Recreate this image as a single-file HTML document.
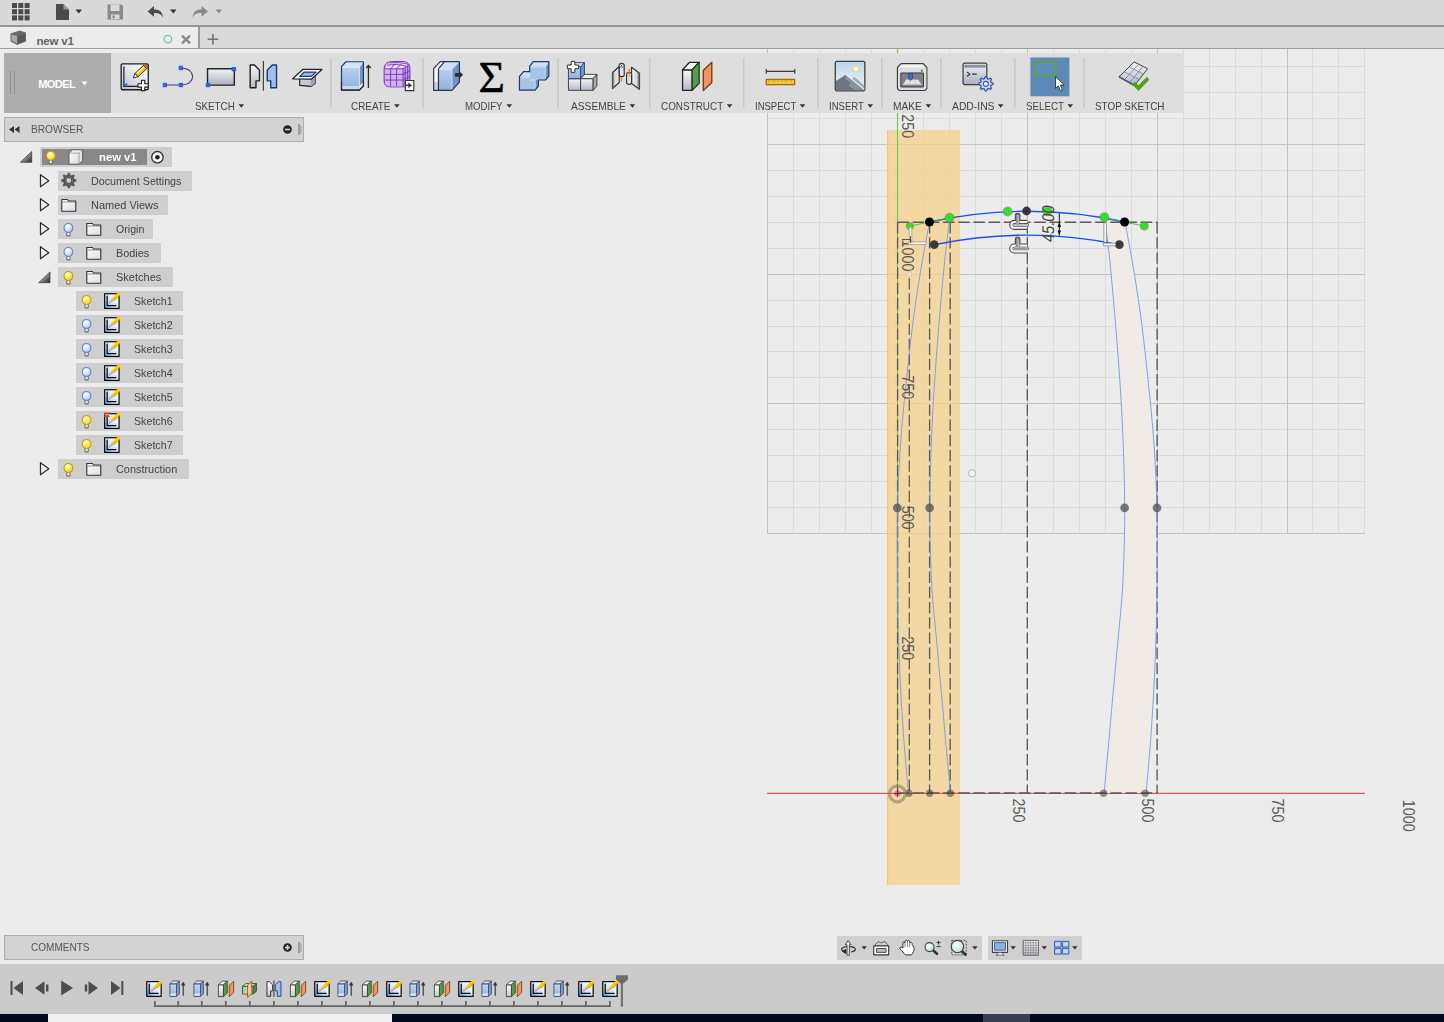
<!DOCTYPE html>
<html lang="en"><head><meta charset="utf-8"><title>new v1</title>
<style>
*{box-sizing:border-box;margin:0;padding:0}
html,body{width:1444px;height:1022px;overflow:hidden;background:#ececec}
body{position:relative;font-family:"Liberation Sans",Arial,sans-serif;font-size:11px;color:#444}
.abs{position:absolute}
#topbar{left:0;top:0;width:1444px;height:25px;background:#d9d9d9}
#topline{left:0;top:25px;width:1444px;height:2px;background:#969696}
#tabrow{left:0;top:27px;width:1444px;height:21px;background:#dadada}
#tab{left:0;top:27px;width:198px;height:21px;background:#ececec}
#tabsep{left:198px;top:27px;width:2px;height:21px;background:#9c9c9c}
#tabline{left:0;top:48px;width:1444px;height:1px;background:#9e9e9e}
#tabtitle{left:36.400px;top:33.700px;font-weight:bold;font-size:11.600px;color:#666;letter-spacing:-0.2px;line-height:14px}
#toolbar{left:4px;top:53px;width:1179.500px;height:59.800px;background:#dedede}
#model{left:4px;top:53px;width:106.800px;height:59.800px;background:#adadad}
.tlabel{position:absolute;top:100px;height:12px;line-height:12px;font-size:11px;color:#444;white-space:nowrap;transform-origin:0 50%;}
.tsep{position:absolute;top:60px;width:1px;height:46px;background:#c6c6c6}
#bhead{left:4px;top:117px;width:300px;height:24.500px;background:#d3d3d3;border:1px solid #adadad}
#chead{left:4px;top:935px;width:300px;height:24.700px;background:#d3d3d3;border:1px solid #adadad}
.ptitle{position:absolute;font-size:11px;color:#555;line-height:12px;white-space:nowrap;transform-origin:0 50%}
.row{position:absolute;height:20px;background:#cecece}
.rtext{position:absolute;font-size:11px;line-height:12px;color:#444;white-space:nowrap;transform-origin:0 50%}
#nav1{left:837px;top:936px;width:145px;height:24px;background:#d0d0d0}
#nav2{left:988px;top:936px;width:94px;height:24px;background:#d0d0d0}
#timeline{left:0;top:964px;width:1444px;height:50px;background:#cbcbcb}
#strip{left:0;top:1014px;width:1444px;height:8px;background:#040a1e}
#strip1{left:48px;top:1014px;width:344px;height:8px;background:#f0f0f0}
#strip2{left:983px;top:1014px;width:47px;height:8px;background:#3b3e50}
svg{position:absolute;overflow:visible}
</style></head>
<body>
<svg class="abs" style="left:0;top:0" width="1444" height="1022" viewBox="0 0 1444 1022">
<path d="M793.5 49V534.0M819.5 49V534.0M845.5 49V534.0M871.5 49V534.0M923.5 49V534.0M949.5 49V534.0M975.5 49V534.0M1001.5 49V534.0M1053.5 49V534.0M1079.5 49V534.0M1105.5 49V534.0M1131.5 49V534.0M1183.5 49V534.0M1209.5 49V534.0M1235.5 49V534.0M1261.5 49V534.0M1312.5 49V534.0M1338.5 49V534.0M1364.5 49V534.0M767.0 507.5H1365.0M767.0 481.5H1365.0M767.0 455.5H1365.0M767.0 429.5H1365.0M767.0 377.5H1365.0M767.0 351.5H1365.0M767.0 326.5H1365.0M767.0 300.5H1365.0M767.0 248.5H1365.0M767.0 222.5H1365.0M767.0 196.5H1365.0M767.0 170.5H1365.0M767.0 118.5H1365.0M767.0 92.5H1365.0M767.0 66.5H1365.0" stroke="#dadada" stroke-width="1" fill="none" shape-rendering="crispEdges"/>
<path d="M767.5 49V534.0M897.5 49V534.0M1027.5 49V534.0M1157.5 49V534.0M1287.5 49V534.0M767.0 533.5H1365.0M767.0 403.5H1365.0M767.0 274.5H1365.0M767.0 144.5H1365.0" stroke="#c1c1c1" stroke-width="1" fill="none" shape-rendering="crispEdges"/>
<rect x="887" y="130" width="73" height="755" fill="#f7d18c" fill-opacity="0.75"/>
<rect x="887" y="130" width="1.300" height="755" fill="#f6c570"/>
<path d="M897.5 49V793" stroke="#62d03c" stroke-width="1.1"/>
<path d="M767 793.4H1365" stroke="#f0505a" stroke-width="1.1"/>
<path d="M1104.8 217.7 C1105.8 226.2 1108.8 250.4 1110.6 268.7 C1112.4 287.0 1114.2 307.8 1115.8 327.3 C1117.4 346.9 1119.0 366.4 1120.2 386.0 C1121.4 405.6 1122.5 424.3 1123.2 444.6 C1124.0 464.9 1124.6 490.4 1124.7 508.0 C1124.8 525.6 1124.4 536.7 1124.1 550.0 C1123.8 563.3 1123.2 576.8 1122.6 588.0 C1121.9 599.2 1121.1 607.2 1120.2 617.0 C1119.3 626.8 1118.2 637.2 1117.3 647.0 C1116.4 656.8 1115.6 666.3 1114.7 676.0 C1113.8 685.7 1112.9 695.2 1112.0 705.0 C1111.1 714.8 1110.7 720.3 1109.4 735.0 C1108.1 749.7 1105.0 783.3 1104.1 793.0 L1146.1 793.0 L1146.1 793.0 C1146.9 783.3 1149.6 754.5 1151.0 735.0 C1152.4 715.5 1153.6 695.7 1154.5 676.0 C1155.4 656.3 1156.1 636.3 1156.6 617.0 C1157.0 597.7 1157.1 578.2 1157.2 560.0 C1157.3 541.8 1157.5 527.2 1157.0 508.0 C1156.5 488.8 1155.4 464.9 1154.0 444.6 C1152.6 424.3 1150.7 405.6 1148.7 386.0 C1146.7 366.4 1144.7 346.9 1142.2 327.3 C1139.7 307.8 1136.4 286.2 1133.5 268.7 C1130.6 251.1 1126.4 229.8 1125.0 222.0 Z" fill="#f0ebe6"/>
<path d="M897.5 222.2H1157.2" stroke="#5a5a5a" stroke-width="1.350" stroke-dasharray="11.4 3.8" fill="none"/>
<path d="M897.5 793H1157.2" stroke="#5a5a5a" stroke-width="1.350" stroke-dasharray="11.4 3.8" fill="none"/>
<path d="M897.6 222.0V793" stroke="#5a5a5a" stroke-width="1.350" stroke-dasharray="11.4 3.8" fill="none"/>
<path d="M929.6 222.0V793" stroke="#5a5a5a" stroke-width="1.350" stroke-dasharray="11.4 3.8" fill="none"/>
<path d="M950.2 222.0V793" stroke="#5a5a5a" stroke-width="1.350" stroke-dasharray="11.4 3.8" fill="none"/>
<path d="M1027.3 222.0V793" stroke="#5a5a5a" stroke-width="1.350" stroke-dasharray="11.4 3.8" fill="none"/>
<path d="M1157.1 222.0V793" stroke="#5a5a5a" stroke-width="1.350" stroke-dasharray="11.4 3.8" fill="none"/>
<path d="M909.3 278V793" stroke="#5a5a5a" stroke-width="1.25" stroke-dasharray="11.4 3.8" fill="none"/>
<path d="M929.5 222.0 C928.1 229.8 923.9 251.1 921.0 268.7 C918.1 286.2 914.8 307.8 912.3 327.3 C909.8 346.9 907.8 366.4 905.8 386.0 C903.8 405.6 901.9 424.3 900.5 444.6 C899.1 464.9 898.0 488.8 897.5 508.0 C897.0 527.2 897.2 541.8 897.3 560.0 C897.4 578.2 897.4 597.7 897.9 617.0 C898.4 636.3 899.1 656.3 900.0 676.0 C900.9 695.7 902.1 715.5 903.5 735.0 C904.9 754.5 907.6 783.3 908.4 793.0" stroke="#7395ee" stroke-width="0.9" fill="none"/>
<path d="M949.7 217.7 C948.7 226.2 945.7 250.4 943.9 268.7 C942.1 287.0 940.3 307.8 938.7 327.3 C937.1 346.9 935.5 366.4 934.3 386.0 C933.1 405.6 932.0 424.3 931.3 444.6 C930.5 464.9 929.9 490.4 929.8 508.0 C929.6 525.6 930.0 536.7 930.4 550.0 C930.8 563.3 931.2 576.8 931.9 588.0 C932.5 599.2 933.4 607.2 934.3 617.0 C935.2 626.8 936.3 637.2 937.2 647.0 C938.1 656.8 938.9 666.3 939.8 676.0 C940.7 685.7 941.6 695.2 942.5 705.0 C943.4 714.8 943.8 720.3 945.1 735.0 C946.4 749.7 949.5 783.3 950.4 793.0" stroke="#7395ee" stroke-width="0.9" fill="none"/>
<path d="M1125.0 222.0 C1126.4 229.8 1130.6 251.1 1133.5 268.7 C1136.4 286.2 1139.7 307.8 1142.2 327.3 C1144.7 346.9 1146.7 366.4 1148.7 386.0 C1150.7 405.6 1152.6 424.3 1154.0 444.6 C1155.4 464.9 1156.5 488.8 1157.0 508.0 C1157.5 527.2 1157.3 541.8 1157.2 560.0 C1157.1 578.2 1157.0 597.7 1156.6 617.0 C1156.1 636.3 1155.4 656.3 1154.5 676.0 C1153.6 695.7 1152.4 715.5 1151.0 735.0 C1149.6 754.5 1146.9 783.3 1146.1 793.0" stroke="#7395ee" stroke-width="0.9" fill="none"/>
<path d="M1104.8 217.7 C1105.8 226.2 1108.8 250.4 1110.6 268.7 C1112.4 287.0 1114.2 307.8 1115.8 327.3 C1117.4 346.9 1119.0 366.4 1120.2 386.0 C1121.4 405.6 1122.5 424.3 1123.2 444.6 C1124.0 464.9 1124.6 490.4 1124.7 508.0 C1124.8 525.6 1124.4 536.7 1124.1 550.0 C1123.8 563.3 1123.2 576.8 1122.6 588.0 C1121.9 599.2 1121.1 607.2 1120.2 617.0 C1119.3 626.8 1118.2 637.2 1117.3 647.0 C1116.4 656.8 1115.6 666.3 1114.7 676.0 C1113.8 685.7 1112.9 695.2 1112.0 705.0 C1111.1 714.8 1110.7 720.3 1109.4 735.0 C1108.1 749.7 1105.0 783.3 1104.1 793.0" stroke="#7395ee" stroke-width="0.9" fill="none"/>
<path d="M929.5 222Q1027.2 200.5 1124.6 222" stroke="#1b4df5" stroke-width="1.4" fill="none"/>
<path d="M934.2 244.7Q1027.2 225.5 1119.4 244.7" stroke="#1b4df5" stroke-width="1.4" fill="none"/>
<path d="M910 226.1L929.5 222M1124.6 222L1144.3 226.1" stroke="#44d430" stroke-width="1" fill="none"/>
<path d="M929.5 222L949.7 217.7M1104.6 217.5L1124.6 222" stroke="#44d430" stroke-width="1" fill="none" opacity="0.6"/>
<defs><filter id="blur1" x="-50%" y="-50%" width="200%" height="200%"><feGaussianBlur stdDeviation="0.7"/></filter><filter id="blur2" x="-50%" y="-50%" width="200%" height="200%"><feGaussianBlur stdDeviation="0.45"/></filter></defs>
<circle cx="972" cy="473.3" r="3.6" fill="#f4f4f4" stroke="#b4b4b4" stroke-width="1"/>
<circle cx="909.3" cy="274" r="2.6" fill="#f0e6d0" stroke="#c9c0b0" stroke-width="0.9"/>
<circle cx="897.3" cy="507.8" r="4.4" fill="#4c4c4c" opacity="0.72" filter="url(#blur1)"/>
<circle cx="929.6" cy="507.8" r="4.4" fill="#4c4c4c" opacity="0.72" filter="url(#blur1)"/>
<circle cx="1124.6" cy="507.8" r="4.4" fill="#4c4c4c" opacity="0.72" filter="url(#blur1)"/>
<circle cx="1157.0" cy="507.8" r="4.4" fill="#4c4c4c" opacity="0.72" filter="url(#blur1)"/>
<circle cx="908.8" cy="793.2" r="3.7" fill="#3a3428" opacity="0.5" filter="url(#blur1)"/>
<circle cx="929.6" cy="793.2" r="3.7" fill="#3a3428" opacity="0.5" filter="url(#blur1)"/>
<circle cx="950.3" cy="793.2" r="3.7" fill="#3a3428" opacity="0.5" filter="url(#blur1)"/>
<circle cx="1103.6" cy="793.2" r="3.7" fill="#3a3428" opacity="0.5" filter="url(#blur1)"/>
<circle cx="1145.2" cy="793.2" r="3.7" fill="#3a3428" opacity="0.5" filter="url(#blur1)"/>
<circle cx="897.4" cy="793.8" r="8" fill="none" stroke="#8c8268" stroke-width="3.200" opacity="0.62" filter="url(#blur2)"/><circle cx="897.400" cy="793.600" r="3" fill="#e2609c" opacity="0.9"/><path d="M894 793.500h7M897.500 790v7" stroke="#402020" stroke-width="0.900" opacity="0.8"/>
<circle cx="1026.6" cy="211.0" r="4.4" fill="#2c2c2c" opacity="0.9" filter="url(#blur1)"/>
<circle cx="934.2" cy="244.7" r="4.4" fill="#2c2c2c" opacity="0.9" filter="url(#blur1)"/>
<circle cx="1119.3" cy="244.7" r="4.4" fill="#2c2c2c" opacity="0.9" filter="url(#blur1)"/>
<circle cx="909.9" cy="226.1" r="4.2" fill="#6a6a5a" opacity="0.55" filter="url(#blur2)"/>
<circle cx="909.9" cy="226.1" r="3.2" fill="#2fe028" filter="url(#blur2)"/>
<circle cx="949.5" cy="217.7" r="5.0" fill="#6a6a5a" opacity="0.55" filter="url(#blur2)"/>
<circle cx="949.5" cy="217.7" r="4.0" fill="#2fe028" filter="url(#blur2)"/>
<circle cx="1007.6" cy="211.5" r="5.0" fill="#6a6a5a" opacity="0.55" filter="url(#blur2)"/>
<circle cx="1007.6" cy="211.5" r="4.0" fill="#2fe028" filter="url(#blur2)"/>
<circle cx="1047.3" cy="211.3" r="5.0" fill="#6a6a5a" opacity="0.55" filter="url(#blur2)"/>
<circle cx="1047.3" cy="211.3" r="4.0" fill="#2fe028" filter="url(#blur2)"/>
<circle cx="1104.4" cy="217.2" r="5.0" fill="#6a6a5a" opacity="0.55" filter="url(#blur2)"/>
<circle cx="1104.4" cy="217.2" r="4.0" fill="#2fe028" filter="url(#blur2)"/>
<circle cx="1144.3" cy="226.1" r="4.6" fill="#6a6a5a" opacity="0.55" filter="url(#blur2)"/>
<circle cx="1144.3" cy="226.1" r="3.6" fill="#2fe028" filter="url(#blur2)"/>
<circle cx="929.5" cy="222" r="4.5" fill="#000"/>
<circle cx="1124.6" cy="222" r="4.5" fill="#000"/>
<text transform="translate(901.6 660.2) rotate(90) scale(0.87 1)" text-anchor="end" font-size="16.5" fill="#5a5a5a" font-family="Liberation Sans,Arial,sans-serif">250</text>
<text transform="translate(901.6 529.6) rotate(90) scale(0.87 1)" text-anchor="end" font-size="16.5" fill="#5a5a5a" font-family="Liberation Sans,Arial,sans-serif">500</text>
<text transform="translate(901.6 399.2) rotate(90) scale(0.87 1)" text-anchor="end" font-size="16.5" fill="#5a5a5a" font-family="Liberation Sans,Arial,sans-serif">750</text>
<text transform="translate(901.6 271.4) rotate(90) scale(0.87 1)" text-anchor="end" font-size="16.5" fill="#5a5a5a" font-family="Liberation Sans,Arial,sans-serif">1000</text>
<clipPath id="cl1"><rect x="890" y="113.600" width="40" height="40"/></clipPath><g clip-path="url(#cl1)"><text transform="translate(901.6 138.2) rotate(90) scale(0.87 1)" text-anchor="end" font-size="16.5" fill="#5a5a5a" font-family="Liberation Sans,Arial,sans-serif">1250</text></g>
<text transform="translate(1012.7 798.6) rotate(90) scale(0.87 1)" text-anchor="start" font-size="16.5" fill="#5a5a5a" font-family="Liberation Sans,Arial,sans-serif">250</text>
<text transform="translate(1142.3 798.6) rotate(90) scale(0.87 1)" text-anchor="start" font-size="16.5" fill="#5a5a5a" font-family="Liberation Sans,Arial,sans-serif">500</text>
<text transform="translate(1272.0 798.6) rotate(90) scale(0.87 1)" text-anchor="start" font-size="16.5" fill="#5a5a5a" font-family="Liberation Sans,Arial,sans-serif">750</text>
<text transform="translate(1402.7 799.8) rotate(90) scale(0.87 1)" text-anchor="start" font-size="16.5" fill="#5a5a5a" font-family="Liberation Sans,Arial,sans-serif">1000</text>
<text transform="translate(1053.600 242.500) rotate(-90) skewX(-7) scale(0.860 1)" font-size="17" fill="#444" font-family="Liberation Sans,Arial,sans-serif">45.00</text>
<path d="M1059.300 213.400V235.500" stroke="#111" stroke-width="1"/><path d="M1059.3 222l-1.800 5h3.600zM1059.3 235.5l-1.800 -5h3.600z" fill="#111"/><path d="M1059.3 211.5l-1.800 4h3.600z" fill="#111" opacity="0"/>
<path d="M1027.2 220.4 H1019.9 V215.6 a2.25 2.25 0 0 0 -4.500 0 V220.4 H1014.200 a4.500 4.500 0 0 0 0 9 H1027.200" fill="#f4f4f4" stroke="#4a4a4a" stroke-width="1.100"/><path d="M1017.650 215.8 V224.9 M1014.200 224.9 H1027.200" fill="none" stroke="#5a5a5a" stroke-width="3.600" stroke-linecap="round"/><path d="M1017.650 215.8 V224.9 M1014.200 224.9 H1027.200" fill="none" stroke="#f4f4f4" stroke-width="2" stroke-linecap="round"/><path d="M1017.650 215.8 V224.9 M1014.200 224.9 H1027.200" fill="none" stroke="#666" stroke-width="0.700" stroke-linecap="round"/>
<path d="M1027.2 244.0 H1019.9 V239.2 a2.25 2.25 0 0 0 -4.500 0 V244.0 H1014.200 a4.500 4.500 0 0 0 0 9 H1027.200" fill="#f4f4f4" stroke="#4a4a4a" stroke-width="1.100"/><path d="M1017.650 239.4 V248.5 M1014.200 248.5 H1027.200" fill="none" stroke="#5a5a5a" stroke-width="3.600" stroke-linecap="round"/><path d="M1017.650 239.4 V248.5 M1014.200 248.5 H1027.200" fill="none" stroke="#f4f4f4" stroke-width="2" stroke-linecap="round"/><path d="M1017.650 239.4 V248.5 M1014.200 248.5 H1027.200" fill="none" stroke="#666" stroke-width="0.700" stroke-linecap="round"/>
<path d="M910.500 228.500 V239.500" fill="none" stroke="#998" stroke-width="3.400" stroke-linecap="round"/><path d="M910.500 228.500 V239.500" fill="none" stroke="#f7f3ea" stroke-width="1.900" stroke-linecap="round"/><path d="M909.500 243.300 H925" fill="none" stroke="#998" stroke-width="3.400" stroke-linecap="round"/><path d="M909.500 243.300 H925" fill="none" stroke="#f7f3ea" stroke-width="1.900" stroke-linecap="round"/>
<path d="M1105.200 224 V241" fill="none" stroke="#888" stroke-width="3.400" stroke-linecap="round"/><path d="M1105.200 224 V241" fill="none" stroke="#f4f4f4" stroke-width="1.900" stroke-linecap="round"/><path d="M1104.500 244.500 H1114.500" fill="none" stroke="#888" stroke-width="3.400" stroke-linecap="round"/><path d="M1104.500 244.500 H1114.500" fill="none" stroke="#f4f4f4" stroke-width="1.900" stroke-linecap="round"/>
<path d="M902 239.500h9M910.5 236v7" stroke="#444" stroke-width="0.900" fill="none"/>
</svg>
<div class="abs" id="topbar"></div><div class="abs" id="topline"></div><div class="abs" id="tabrow"></div><div class="abs" id="tab"></div><div class="abs" id="tabsep"></div><div class="abs" id="tabline"></div>
<svg style="left:0;top:0" width="260" height="50" viewBox="0 0 260 50">
<g fill="#4b4b4b">
<rect x="12" y="3" width="5" height="5"/><rect x="18.3" y="3" width="5" height="5"/><rect x="24.6" y="3" width="5" height="5"/>
<rect x="12" y="9.2" width="5" height="5"/><rect x="18.3" y="9.2" width="5" height="5"/><rect x="24.6" y="9.2" width="5" height="5"/>
<rect x="12" y="15.4" width="5" height="5"/><rect x="18.3" y="15.4" width="5" height="5"/><rect x="24.6" y="15.4" width="5" height="5"/>
<path d="M56 4h7.5l5.5 5.5v10.500h-13z"/>
<path d="M75.500 9.500h6.500l-3.250 4z" fill="#333"/>
<path d="M147.500 11.500l6.500-5.500v3.500c6 0 8.500 2.500 9 8.500c-1.500-3.800-4-5-9-5v3.800z"/>
<path d="M170 9.500h6.500l-3.250 4z" fill="#333"/>
</g>
<path d="M63.500 4v5.500h5.500z" fill="#d9d9d9" opacity="0.55"/>
<g fill="#8a8a8a">
<path d="M107.500 4.500h14l1.500 1.500v13.500h-15.500z"/>
<path d="M208 11.500l-6.500-5.500v3.500c-6 0-8.500 2.500-9 8.500c1.500-3.800 4-5 9-5v3.800z"/>
<path d="M215.500 9.500h6.500l-3.250 4z"/>
</g>
<rect x="110.500" y="4.500" width="9" height="6.500" fill="#d9d9d9"/>
<rect x="111" y="14.500" width="8.500" height="4.500" fill="#d9d9d9"/>
<rect x="112.500" y="15.500" width="2.200" height="2.800" fill="#8a8a8a"/>
<!-- tab cube -->
<path d="M10.500 33.500l9-3 6.500 2v9l-9 3.500-6.500-3.500z" fill="#6a6a6a"/>
<path d="M11.500 34.500l5.500 1.500v7.500l-5.500-3z" fill="#a9a9a9"/>
<path d="M17.800 36l7.400-2.200v7.200l-7.400 2.900z" fill="#595959"/>
<!-- circle, x, plus -->
<circle cx="167.900" cy="39.100" r="3.850" fill="none" stroke="#58c6ac" stroke-width="1.250"/>
<path d="M182 35.700l8 7.600M190 35.700l-8 7.600" stroke="#8a8a8a" stroke-width="2.500" fill="none"/>
<path d="M207.600 39.300h10.600M212.900 34v10.600" stroke="#707070" stroke-width="1.600" fill="none"/>
</svg>
<div class="abs" id="tabtitle">new v1</div>
<div class="abs" id="toolbar"></div><div class="abs" id="model"></div>
<div class="abs" style="left:10px;top:71px;width:1px;height:23px;background:#8d8d8d"></div><div class="abs" style="left:14px;top:71px;width:1px;height:23px;background:#8d8d8d"></div>
<div class="abs" style="left:38.200px;top:78px;font-size:11px;line-height:13px;font-weight:bold;color:#fff;letter-spacing:-0.55px">MODEL</div>
<svg style="left:80.800px;top:80.800px" width="8" height="6"><path d="M0.500 0.500h6l-3 4z" fill="#fff"/></svg>
<div class="abs" id="bhead"></div><div class="abs" id="chead"></div>
<div class="ptitle" style="left:31px;top:123px;transform:scaleX(0.922)">BROWSER</div>
<div class="ptitle" style="left:31px;top:941px;transform:scaleX(0.912)">COMMENTS</div>
<svg style="left:0;top:118px" width="310" height="24" viewBox="0 0 310 24">
<path d="M9 11.500l5-3.500v7zM14.500 11.500l5-3.500v7z" fill="#333"/>
<circle cx="287.500" cy="11.500" r="4.300" fill="#222"/><rect x="285" y="10.700" width="5" height="1.600" fill="#d3d3d3"/>
<rect x="298.500" y="6" width="1" height="11" fill="#666"/><rect x="300.500" y="7.500" width="1" height="8" fill="#999"/>
</svg>
<svg style="left:0;top:936px" width="310" height="24" viewBox="0 0 310 24">
<circle cx="287.500" cy="11.500" r="4.300" fill="#222"/><rect x="285" y="10.700" width="5" height="1.600" fill="#d3d3d3"/><rect x="286.700" y="9" width="1.600" height="5" fill="#d6d6d6"/>
<rect x="298.500" y="6" width="1" height="11" fill="#666"/><rect x="300.500" y="7.500" width="1" height="8" fill="#999"/>
</svg>
<div class="abs" id="nav1"></div><div class="abs" id="nav2"></div>
<div class="abs" id="timeline"></div><div class="abs" id="strip"></div><div class="abs" id="strip1"></div><div class="abs" id="strip2"></div>
<svg style="left:0;top:0" width="1444" height="118" viewBox="0 0 1444 118">
<defs>
<linearGradient id="gsk" x1="0" y1="1" x2="1" y2="0"><stop offset="0" stop-color="#b9bed0"/><stop offset="0.6" stop-color="#e9eaf0"/><stop offset="1" stop-color="#fafafa"/></linearGradient>
<linearGradient id="grc" x1="0" y1="0" x2="0" y2="1"><stop offset="0" stop-color="#f4f4f6"/><stop offset="1" stop-color="#a9afc2"/></linearGradient>
<linearGradient id="gbl" x1="0" y1="0" x2="0" y2="1"><stop offset="0" stop-color="#b9d0ee"/><stop offset="1" stop-color="#8fb0dc"/></linearGradient>
<linearGradient id="ggr" x1="0" y1="0" x2="0" y2="1"><stop offset="0" stop-color="#f6f6f8"/><stop offset="1" stop-color="#b4b9c6"/></linearGradient>
<linearGradient id="gsky" x1="0" y1="0" x2="0" y2="1"><stop offset="0" stop-color="#bcd6ee"/><stop offset="1" stop-color="#eef3f6"/></linearGradient>
<linearGradient id="gpl" x1="0" y1="0" x2="1" y2="0"><stop offset="0" stop-color="#fbfbfc"/><stop offset="0.5" stop-color="#d9dce4"/><stop offset="1" stop-color="#f2f3f6"/></linearGradient>
<radialGradient id="gpu" cx="0.4" cy="0.35" r="0.8"><stop offset="0" stop-color="#d7b0f6"/><stop offset="1" stop-color="#a765e0"/></radialGradient>
</defs>
<rect x="330.0" y="58" width="1.6" height="50" fill="#c9c9c9"/>
<rect x="422.2" y="58" width="1.6" height="50" fill="#c9c9c9"/>
<rect x="557.2" y="58" width="1.6" height="50" fill="#c9c9c9"/>
<rect x="648.9" y="58" width="1.6" height="50" fill="#c9c9c9"/>
<rect x="742.9" y="58" width="1.6" height="50" fill="#c9c9c9"/>
<rect x="817.0" y="58" width="1.6" height="50" fill="#c9c9c9"/>
<rect x="881.0" y="58" width="1.6" height="50" fill="#c9c9c9"/>
<rect x="940.1" y="58" width="1.6" height="50" fill="#c9c9c9"/>
<rect x="1014.0" y="58" width="1.6" height="50" fill="#c9c9c9"/>
<rect x="1083.0" y="58" width="1.6" height="50" fill="#c9c9c9"/>
<path d="M 122.05 63.84 L 147.34 63.84 L 148.26 64.75 L 148.26 88.82 L 147.34 89.73 L 122.05 89.73 L 121.14 88.82 L 121.14 64.75 Z" fill="url(#gsk)" stroke="#1e1e1e" stroke-width="1.300" stroke-linejoin="round"/>
<path d="M 123.88 66.43 L 123.88 86.38 L 137.90 86.38" fill="none" stroke="#1e1e1e" stroke-width="1.200"/>
<rect x="124.49" y="83.49" width="3" height="3" fill="#3c6fd8"/>
<path d="M 134.85 73.59 L 143.54 65.36 L 146.73 68.71 L 138.05 76.79 Z" fill="#f7c21e" stroke="#2a2208" stroke-width="0.900"/>
<path d="M 134.85 73.59 L 138.05 76.79 L 133.33 77.85 Z" fill="#fff" stroke="#222" stroke-width="0.900" stroke-linejoin="round"/>
<path d="M 143.23 65.05 L 144.60 63.84 Q 147.04 63.84 147.95 67.19 L 147.04 68.71 Z" fill="#d07a3a" stroke="#5a3a1a" stroke-width="0.7"/>
<path d="M 136.38 72.98 L 143.54 66.27 L 144.45 67.19 L 137.29 73.89 Z" fill="#fdf0b0"/>
<path d="M 141.40 80.29 L 144.75 80.29 L 144.75 83.79 L 148.26 83.79 L 148.26 87.15 L 144.75 87.15 L 144.75 90.65 L 141.40 90.65 L 141.40 87.15 L 137.90 87.15 L 137.90 83.79 L 141.40 83.79 Z" fill="#fff" stroke="#1a1a1a" stroke-width="1.100" stroke-linejoin="round"/>
<path d="M 164.86 85.01 L 180.86 85.01 C 196.55 85.01 196.55 67.95 180.86 67.95" fill="none" stroke="#444" stroke-width="1.100"/>
<rect x="162.66" y="82.81" width="4.4" height="4.4" fill="#2f66d8"/>
<rect x="178.66" y="82.81" width="4.4" height="4.4" fill="#2f66d8"/>
<rect x="178.66" y="65.75" width="4.4" height="4.4" fill="#2f66d8"/>
<path d="M 207.52 68.71 L 234.33 68.71 L 234.33 85.16 L 207.52 85.16 Z" fill="url(#grc)" stroke="#222" stroke-width="1.400"/>
<rect x="231.68" y="66.97" width="4.4" height="4.400" fill="#2f66d8"/>
<rect x="205.78" y="82.81" width="4.4" height="4.400" fill="#2f66d8"/>
<path d="M 250.18 65.05 L 254.44 65.05 L 259.47 70.23 L 259.47 80.90 L 255.97 80.90 L 255.97 87.75 L 250.18 87.75 Z" fill="url(#ggr)" stroke="#222" stroke-width="1.400" stroke-linejoin="round"/>
<path d="M 276.53 65.05 L 272.27 65.05 L 267.24 70.23 L 267.24 80.90 L 270.74 80.90 L 270.74 87.75 L 276.53 87.75 Z" fill="#a3bfe6" stroke="#1c3c7c" stroke-width="1.400" stroke-linejoin="round"/>
<path d="M 263.36 61.09 L 263.36 90.80" stroke="#333" stroke-width="1.1"/>
<path d="M 299.69 77.85 L 299.69 85.47 L 310.81 86.38 L 315.38 83.34 L 315.38 76.33 Z" fill="#c5cad6" stroke="#222" stroke-width="1.200" stroke-linejoin="round"/>
<path d="M 310.81 79.38 L 315.38 76.33 L 315.38 83.34 L 310.81 86.38 Z" fill="#9aa2b4"/>
<path d="M 292.68 78.77 L 302.74 69.47 L 321.93 69.47 L 311.57 79.07 Z" fill="#f8f8f8" stroke="#222" stroke-width="1.250" stroke-linejoin="round"/>
<path d="M 299.69 76.33 L 304.26 72.06 L 316.14 72.06 L 311.27 76.33 Z" fill="#9cbbe4" stroke="#1c3c7c" stroke-width="1.200" stroke-linejoin="round"/>
<path d="M 341.49 66.72 L 359.38 66.72 L 359.38 90.16 L 341.49 90.16 Z" fill="url(#gbl)"/>
<path d="M 341.49 66.72 L 345.98 61.74 L 363.43 61.74 L 359.38 66.72 Z" fill="#d3e2f5"/>
<path d="M 359.38 66.72 L 363.43 61.74 L 363.43 85.93 L 359.38 90.16 Z" fill="#7094c8"/>
<path d="M 342.11 86.05 L 358.94 86.05 L 358.94 89.54 L 342.11 89.54 Z" fill="#d3d9e4"/>
<path d="M 359.82 85.80 L 362.93 82.18 L 362.93 85.68 L 359.82 89.29 Z" fill="#eef1f6"/>
<path d="M 341.99 67.22 L 359.38 67.22 L 363.18 62.23 M 359.38 67.22 L 359.38 89.67" fill="none" stroke="#eef4fb" stroke-width="0.800" stroke-linejoin="round"/>
<path d="M 341.49 66.72 L 345.98 61.74 L 363.43 61.74 L 363.43 85.93 L 359.38 90.16 L 341.49 90.16 Z" fill="none" stroke="#223a62" stroke-width="1.200" stroke-linejoin="round"/>
<path d="M 341.49 80.94 L 341.49 90.16 L 359.38 90.16 L 363.43 85.93 L 363.43 79.69" fill="none" stroke="#2a2a2a" stroke-width="1.200" stroke-linejoin="round"/>
<path d="M 368.42 65.98 L 368.42 87.92 M 366.17 67.97 L 368.42 65.48 L 370.79 67.97" stroke="#2a2a2a" stroke-width="1.300" fill="none"/>
<path d="M 384.13 69.09 C 384.13 63.48 387.75 61.49 393.98 61.49 L 402.08 61.49 C 407.70 61.49 409.94 64.10 409.94 69.09 L 409.94 79.69 C 409.94 84.05 407.70 86.86 403.02 86.86 L 389.62 86.86 C 385.88 86.86 384.13 84.68 384.13 80.94 Z" fill="#c595ee" stroke="#7038b0" stroke-width="1"/>
<path d="M 385.25 68.47 C 385.88 64.10 388.99 62.11 393.98 62.11 L 402.08 62.11 C 405.20 62.11 407.70 63.17 408.63 65.35 L 403.02 68.78 Z" fill="#ecd8fb"/>
<path d="M 384.88 68.84 L 403.02 68.84 L 403.02 86.42 L 389.62 86.42 C 386.50 86.42 384.88 84.68 384.88 81.56 Z" fill="#d6b0f5"/>
<path d="M 384.50 68.84 L 403.02 68.84 L 403.02 86.67 M 384.50 74.45 L 403.02 74.45 M 384.50 80.06 L 403.02 80.06 M 390.61 68.84 L 390.61 86.67 M 396.60 68.84 L 396.60 86.67 M 403.02 68.84 L 409.07 64.73 M 403.02 74.45 L 409.82 70.71 M 403.02 80.06 L 409.82 76.57 M 390.61 68.84 L 395.23 63.48 M 396.60 68.84 L 401.46 63.79 M 387.12 65.35 C 392.11 64.10 401.46 64.10 406.45 66.47 M 389.62 62.98 C 395.23 62.23 403.33 62.55 408.32 64.42 M 405.20 67.53 L 405.20 85.30 M 407.70 65.98 L 407.70 82.81" fill="none" stroke="#7038b0" stroke-width="0.900"/>
<path d="M 405.33 80.44 L 413.81 80.44 L 413.81 90.66 L 405.33 90.66 Z" fill="#f6f6f6" stroke="#333" stroke-width="1.100"/>
<path d="M 405.70 84.55 L 408.44 84.55 L 408.44 82.43 L 411.94 85.30 L 408.44 88.17 L 408.44 86.05 L 405.70 86.05 Z" fill="#333"/>
<path d="M 433.67 68.65 L 440.22 61.67 L 444.58 61.67 L 438.47 68.65 L 438.47 90.47 L 433.67 90.47 Z" fill="#f6f7f9"/>
<path d="M 433.67 82.18 L 438.47 82.18 L 438.47 90.47 L 433.67 90.47 Z" fill="#c9cfdc"/>
<path d="M 438.47 68.65 L 452.00 68.65 L 452.00 90.47 L 438.47 90.47 Z" fill="url(#gbl)"/>
<path d="M 438.47 68.65 L 444.58 61.67 L 459.41 61.67 L 452.00 68.65 Z" fill="#cfe0f4"/>
<path d="M 452.00 68.65 L 459.41 61.67 L 459.41 82.18 L 452.00 90.47 Z" fill="#7094c8"/>
<path d="M 439.17 69.26 L 452.00 69.26 L 458.72 62.54 M 452.00 69.26 L 452.00 89.86" fill="none" stroke="#e8f0fa" stroke-width="0.700"/>
<path d="M 433.67 68.65 L 440.22 61.67 L 459.41 61.67 L 459.41 82.18 L 452.00 90.47 L 433.67 90.47 Z M 438.47 68.65 L 438.47 90.47 M 438.47 68.65 L 444.58 61.67" fill="none" stroke="#2a3550" stroke-width="1.200" stroke-linejoin="round"/>
<path d="M 455.05 73.02 L 458.98 73.02 L 458.98 70.66 L 463.08 74.85 L 458.98 79.04 L 458.98 76.77 L 455.05 76.77 Z" fill="#303030"/>
<text x="478.400" y="91.700" font-family="Liberation Serif,serif" font-size="44.500" fill="#000" stroke="#000" stroke-width="0.500" textLength="26.400" lengthAdjust="spacingAndGlyphs">Σ</text>
<path d="M 519.45 76.51 L 523.55 71.71 L 529.66 71.71 L 529.66 66.47 L 533.15 61.67 L 548.86 61.67 L 548.86 76.07 L 545.36 80.00 L 538.38 80.00 L 538.38 86.10 L 535.16 90.21 L 519.45 90.21 Z" fill="#a6c3e8"/>
<path d="M 529.66 66.47 L 533.15 61.67 L 548.86 61.67 L 545.36 66.47 Z M 519.45 76.51 L 523.55 71.71 L 529.66 71.71 L 529.66 76.51 Z" fill="#cfe0f4"/>
<path d="M 545.36 66.47 L 548.86 61.67 L 548.86 76.07 L 545.36 80.00 Z M 535.16 80.43 L 538.38 80.00 L 538.38 86.10 L 535.16 90.21 Z" fill="#7094c8"/>
<path d="M 530.27 67.08 L 545.36 67.08 L 548.42 62.54 M 545.36 67.08 L 545.36 79.39 M 520.15 77.12 L 529.66 77.12 M 535.16 80.43 L 535.16 89.60 M 529.66 80.00 L 535.16 80.00" fill="none" stroke="#e4edf8" stroke-width="0.700"/>
<path d="M 519.45 76.51 L 523.55 71.71 L 529.66 71.71 L 529.66 66.47 L 533.15 61.67 L 548.86 61.67 L 548.86 76.07 L 545.36 80.00 L 538.38 80.00 L 538.38 86.10 L 535.16 90.21 L 519.45 90.21 Z" fill="none" stroke="#223a62" stroke-width="1.200" stroke-linejoin="round"/>
<path d="M 568.45 78.61 L 580.64 78.61 L 580.64 90.34 L 568.45 90.34 Z" fill="url(#ggr)" stroke="#444" stroke-width="1" stroke-linejoin="round"/><path d="M 568.45 78.61 L 568.45 78.61 L 580.64 78.61 L 580.64 78.61 Z" fill="#eee" stroke="#444" stroke-width="1" stroke-linejoin="round"/><path d="M 580.64 78.61 L 580.64 78.61 L 580.64 90.34 L 580.64 90.34 Z" fill="#aaa" stroke="#444" stroke-width="1" stroke-linejoin="round"/>
<path d="M 580.64 78.61 L 593.13 78.61 L 593.13 90.34 L 580.64 90.34 Z" fill="url(#ggr)" stroke="#444" stroke-width="1" stroke-linejoin="round"/><path d="M 580.64 78.61 L 584.45 74.35 L 596.94 74.35 L 593.13 78.61 Z" fill="#eef0f4" stroke="#444" stroke-width="1" stroke-linejoin="round"/><path d="M 593.13 78.61 L 596.94 74.35 L 596.94 86.08 L 593.13 90.34 Z" fill="#a4aab8" stroke="#444" stroke-width="1" stroke-linejoin="round"/>
<path d="M 568.45 66.43 L 580.64 66.43 L 580.64 78.61 L 568.45 78.61 Z" fill="url(#gbl)" stroke="#3a4c70" stroke-width="1" stroke-linejoin="round"/><path d="M 568.45 66.43 L 572.26 62.62 L 584.45 62.62 L 580.64 66.43 Z" fill="#d5e3f5" stroke="#3a4c70" stroke-width="1" stroke-linejoin="round"/><path d="M 580.64 66.43 L 584.45 62.62 L 584.45 74.80 L 580.64 78.61 Z" fill="#7295c8" stroke="#3a4c70" stroke-width="1" stroke-linejoin="round"/>
<path d="M 571.20 61.40 L 574.85 61.40 L 574.85 65.05 L 578.66 65.05 L 578.66 68.71 L 574.85 68.71 L 574.85 72.37 L 571.20 72.37 L 571.20 68.71 L 567.39 68.71 L 567.39 65.05 L 571.20 65.05 Z" fill="#fff" stroke="#333" stroke-width="1" stroke-linejoin="round"/>
<path d="M 612.49 72.71 L 619.23 66.47 L 619.23 82.50 L 612.49 88.54 Z" fill="url(#gpl)" stroke="#333" stroke-width="1.200" stroke-linejoin="round"/>
<path d="M 612.49 72.71 L 613.74 72.33 L 613.74 87.48 L 612.49 88.54 Z" fill="#eef0f4" stroke="#333" stroke-width="0.700" stroke-linejoin="round"/>
<path d="M 619.23 65.35 C 619.23 62.55 624.21 62.55 624.21 65.35 L 624.21 74.70 C 624.21 77.20 619.23 77.20 619.23 74.70 Z" fill="url(#gpl)" stroke="#333" stroke-width="1.200" stroke-linejoin="round"/>
<ellipse cx="621.60" cy="65.48" rx="2.300" ry="1.700" fill="#fff" stroke="#333" stroke-width="0.800"/><circle cx="621.47" cy="65.48" r="0.600" fill="#222"/>
<path d="M 631.57 67.35 L 639.49 73.33 L 639.49 89.35 L 631.57 83.43 Z" fill="url(#gpl)" stroke="#333" stroke-width="1.200" stroke-linejoin="round"/>
<path d="M 638.05 72.33 L 639.49 73.33 L 639.49 89.35 L 638.05 88.29 Z" fill="#b4bac8" stroke="#333" stroke-width="0.700" stroke-linejoin="round"/>
<path d="M 626.58 74.39 C 626.58 71.90 631.57 71.90 631.57 74.39 L 631.57 82.50 C 631.57 84.99 626.58 84.99 626.58 82.50 Z" fill="url(#gpl)" stroke="#333" stroke-width="1.200" stroke-linejoin="round"/>
<path d="M 626.58 74.39 C 626.58 76.57 631.57 76.57 631.57 74.39" fill="none" stroke="#8a8e9a" stroke-width="0.700"/>
<path d="M 621.47 76.89 L 621.47 81.87 M 629.33 68.78 L 629.33 74.70" stroke="#f57a10" stroke-width="1.300" fill="none"/>
<path d="M 682.56 69.78 L 692.16 69.78 L 692.16 90.34 L 682.56 90.34 Z" fill="url(#ggr)" stroke="#222" stroke-width="1.300" stroke-linejoin="round"/>
<path d="M 682.56 69.78 L 689.57 62.31 L 699.17 62.31 L 692.16 69.78 Z" fill="#f8f8fa" stroke="#222" stroke-width="1.300" stroke-linejoin="round"/>
<path d="M 692.16 69.78 L 699.17 62.31 L 699.17 83.18 L 692.16 90.34 Z" fill="#5a9a4a" stroke="#1f3f1a" stroke-width="1.300" stroke-linejoin="round"/>
<path d="M 703.28 70.54 L 711.81 62.16 L 711.81 82.42 L 703.28 90.65 Z" fill="#ee9660" stroke="#7a3408" stroke-width="1.300" stroke-linejoin="round"/>
<path d="M 766.28 71.30 L 794.77 71.30 M 766.28 69.02 L 766.28 73.74 M 794.77 69.02 L 794.77 73.74" stroke="#3a3a3a" stroke-width="1.200" fill="none"/>
<path d="M 766.28 79.38 L 794.62 79.38 L 794.62 84.56 L 766.28 84.56 Z" fill="#f5c832" stroke="#a8680c" stroke-width="1.250" stroke-linejoin="round"/>
<path d="M 768.57 79.38 L 768.57 81.66 M 770.85 79.38 L 770.85 80.75 M 773.14 79.38 L 773.14 81.66 M 775.42 79.38 L 775.42 80.75 M 777.71 79.38 L 777.71 81.66 M 779.99 79.38 L 779.99 80.75 M 782.28 79.38 L 782.28 81.66 M 784.56 79.38 L 784.56 80.75 M 786.85 79.38 L 786.85 81.66 M 789.13 79.38 L 789.13 80.75 M 791.42 79.38 L 791.42 81.66" stroke="#b57e12" stroke-width="0.700" fill="none"/>
<path d="M 836.36 61.40 L 863.78 61.40 L 864.85 62.46 L 864.85 89.73 L 863.78 90.80 L 836.36 90.80 L 835.29 89.73 L 835.29 62.46 Z" fill="url(#gsky)" stroke="#3c3c3c" stroke-width="1.300" stroke-linejoin="round"/>
<path d="M 845.50 83.18 L 854.64 77.09 L 864.24 85.47 L 864.24 90.04 L 845.50 90.04 Z" fill="#a3abb8"/>
<path d="M 836.06 80.90 L 845.50 74.80 L 863.78 89.73 L 863.78 90.19 L 836.06 90.19 Z" fill="#6d7482"/>
<path d="M 845.50 74.80 L 863.78 89.73 L 854.64 89.73 L 848.55 85.47 L 850.83 82.42 L 845.50 79.38 Z" fill="#8c93a0"/>
<path d="M 845.50 74.80 L 846.72 74.50 L 864.39 88.82 L 863.78 89.73 Z" fill="#eef2f4"/>
<circle cx="856.01" cy="69.02" r="2.900" fill="#fffbe0" stroke="#f2d24a" stroke-width="0.900"/>
<path d="M 901.11 63.68 L 923.20 63.68 L 926.85 67.49 L 926.85 88.52 L 925.03 90.34 L 899.13 90.34 L 897.45 88.52 L 897.45 67.49 Z" fill="#f1f1f3" stroke="#3c3c3c" stroke-width="1.200" stroke-linejoin="round"/>
<path d="M 898.06 67.80 L 926.24 67.80 L 926.24 88.21 L 924.72 89.73 L 899.43 89.73 L 898.06 88.21 Z" fill="#dcdde2"/>
<path d="M 900.80 72.98 L 923.50 72.98 L 923.50 86.99 L 900.80 86.99 Z" fill="#7d8088" stroke="#3c3c3c" stroke-width="1"/>
<path d="M 906.14 79.38 L 918.32 79.38 L 921.67 84.86 L 902.78 84.86 Z" fill="#f4f4f4" stroke="#9a9a9a" stroke-width="0.600"/>
<path d="M 905.22 81.20 L 919.39 81.20 M 904.00 83.03 L 920.46 83.03 M 910.10 79.38 L 908.88 84.86 M 914.36 79.38 L 915.58 84.86" fill="none" stroke="#b5b5b5" stroke-width="0.500"/>
<path d="M 908.73 73.59 L 912.53 73.59 L 912.53 78.16 L 910.55 80.59 L 908.73 78.16 Z" fill="#3d6fd0" stroke="#1c3f90" stroke-width="0.700"/>
<rect x="920.91" y="69.78" width="1.800" height="1.800" fill="#1f8a1f"/>
<path d="M 964.13 63.14 L 985.73 63.14 L 986.81 64.22 L 986.81 83.49 L 985.73 84.57 L 964.13 84.57 L 963.05 83.49 L 963.05 64.22 Z" fill="url(#grc)" stroke="#3c3c3c" stroke-width="1.200" stroke-linejoin="round"/>
<path d="M 964.31 64.76 L 985.55 64.76 L 985.55 67.64 L 964.31 67.64 Z" fill="#8b8e98"/>
<path d="M 967.01 71.97 L 969.89 74.13 L 967.01 76.29 M 972.05 74.13 L 976.73 74.13" fill="none" stroke="#333" stroke-width="1.100"/>
<path d="M993.08 83.14 L993.08 84.56 L990.98 85.39 L990.59 86.35 L991.48 88.42 L990.48 89.42 L988.41 88.52 L987.45 88.92 L986.62 91.01 L985.21 91.01 L984.37 88.92 L983.41 88.52 L981.35 89.42 L980.35 88.42 L981.24 86.35 L980.84 85.39 L978.75 84.56 L978.75 83.14 L980.84 82.31 L981.24 81.35 L980.35 79.28 L981.35 78.28 L983.41 79.18 L984.37 78.78 L985.21 76.68 L986.62 76.68 L987.45 78.78 L988.41 79.18 L990.48 78.28 L991.48 79.28 L990.59 81.35 L990.98 82.31 Z" fill="#c7d6f2" stroke="#2f4f9f" stroke-width="1.200" stroke-linejoin="round"/>
<circle cx="985.91" cy="83.85" r="2.500" fill="#fff" stroke="#2f4f9f" stroke-width="1.100"/>
<rect x="1030.400" y="57.500" width="39" height="38.800" fill="#5a8ab5"/>
<rect x="1035.400" y="61.800" width="20.200" height="13.900" fill="#5d8eb8" stroke="#67a816" stroke-width="1.300"/>
<path d="M 1055.59 76.47 L 1055.59 88.35 L 1058.29 85.83 L 1060.45 90.69 L 1062.43 89.79 L 1060.27 85.11 L 1064.23 85.11 Z" fill="#fff" stroke="#2a2a2a" stroke-width="0.900" stroke-linejoin="round"/>
<path d="M 1119.15 77.37 L 1134.45 86.01 L 1134.81 84.21 L 1119.51 75.75 Z" fill="#8a8e98" stroke="#444" stroke-width="0.800" stroke-linejoin="round"/>
<path d="M 1119.33 76.65 L 1134.09 61.88 L 1147.60 68.73 L 1134.81 85.11 Z" fill="url(#ggr)" stroke="#444" stroke-width="1" stroke-linejoin="round"/>
<path d="M 1124.19 71.79 L 1138.96 79.53 M 1129.05 66.92 L 1143.46 74.13 M 1138.60 64.22 L 1124.55 79.71 M 1143.10 66.38 L 1129.77 82.41" fill="none" stroke="#7c808c" stroke-width="0.800"/>
<path d="M 1132.29 84.21 L 1134.99 81.87 L 1138.42 85.29 L 1147.06 76.65 L 1149.22 79.71 L 1138.42 91.05 Z" fill="#4ea30e"/>
</svg>
<div class="tlabel" style="left:194.9px;transform:scaleX(0.890)">SKETCH</div>
<div class="tlabel" style="left:350.8px;transform:scaleX(0.899)">CREATE</div>
<div class="tlabel" style="left:465.1px;transform:scaleX(0.877)">MODIFY</div>
<div class="tlabel" style="left:570.8px;transform:scaleX(0.926)">ASSEMBLE</div>
<div class="tlabel" style="left:660.7px;transform:scaleX(0.901)">CONSTRUCT</div>
<div class="tlabel" style="left:754.6px;transform:scaleX(0.864)">INSPECT</div>
<div class="tlabel" style="left:828.8px;transform:scaleX(0.867)">INSERT</div>
<div class="tlabel" style="left:892.8px;transform:scaleX(0.927)">MAKE</div>
<div class="tlabel" style="left:951.5px;transform:scaleX(0.940)">ADD-INS</div>
<div class="tlabel" style="left:1025.7px;transform:scaleX(0.886)">SELECT</div>
<div class="tlabel" style="left:1095.0px;transform:scaleX(0.900)">STOP SKETCH</div>
<svg style="left:0;top:0" width="1444" height="118"><path d="M238.5 104.200h5.600l-2.800 3.600zM394.1 104.200h5.600l-2.800 3.600zM506.5 104.200h5.600l-2.800 3.600zM629.6 104.200h5.600l-2.800 3.600zM726.8 104.200h5.600l-2.800 3.600zM799.7 104.200h5.600l-2.800 3.600zM867.5 104.200h5.600l-2.800 3.600zM925.6 104.200h5.600l-2.800 3.600zM997.9 104.200h5.600l-2.800 3.600zM1067.5 104.200h5.600l-2.800 3.600z" fill="#333"/></svg>
<div class="row" style="left:40px;top:147.2px;width:131.800px;height:19.400px"></div>
<div class="abs" style="left:42px;top:149px;width:104.800px;height:16px;background:#888888"></div>
<div class="rtext" style="left:98.600px;top:151px;font-weight:bold;color:#fff;transform:scaleX(1.025)">new v1</div>
<div class="row" style="left:58.0px;top:171.2px;width:134.0px;height:19.400px"></div>
<div class="rtext" style="left:90.6px;top:175.2px;transform:scaleX(0.973)">Document Settings</div>
<div class="row" style="left:58.0px;top:195.2px;width:109.9px;height:19.400px"></div>
<div class="rtext" style="left:90.6px;top:199.2px;transform:scaleX(0.998)">Named Views</div>
<div class="row" style="left:58.0px;top:219.2px;width:94.9px;height:19.400px"></div>
<div class="rtext" style="left:115.6px;top:223.2px;transform:scaleX(0.965)">Origin</div>
<div class="row" style="left:58.0px;top:243.2px;width:102.9px;height:19.400px"></div>
<div class="rtext" style="left:115.6px;top:247.2px;transform:scaleX(0.987)">Bodies</div>
<div class="row" style="left:58.0px;top:267.2px;width:114.8px;height:19.400px"></div>
<div class="rtext" style="left:115.8px;top:271.2px;transform:scaleX(1.001)">Sketches</div>
<div class="row" style="left:76.0px;top:291.2px;width:106.9px;height:19.400px"></div>
<div class="rtext" style="left:133.8px;top:295.2px;transform:scaleX(0.971)">Sketch1</div>
<div class="row" style="left:76.0px;top:315.2px;width:106.9px;height:19.400px"></div>
<div class="rtext" style="left:133.8px;top:319.2px;transform:scaleX(0.971)">Sketch2</div>
<div class="row" style="left:76.0px;top:339.2px;width:106.9px;height:19.400px"></div>
<div class="rtext" style="left:133.8px;top:343.2px;transform:scaleX(0.971)">Sketch3</div>
<div class="row" style="left:76.0px;top:363.2px;width:106.9px;height:19.400px"></div>
<div class="rtext" style="left:133.8px;top:367.2px;transform:scaleX(0.971)">Sketch4</div>
<div class="row" style="left:76.0px;top:387.2px;width:106.9px;height:19.400px"></div>
<div class="rtext" style="left:133.8px;top:391.2px;transform:scaleX(0.971)">Sketch5</div>
<div class="row" style="left:76.0px;top:411.2px;width:106.9px;height:19.400px"></div>
<div class="rtext" style="left:133.8px;top:415.2px;transform:scaleX(0.971)">Sketch6</div>
<div class="row" style="left:76.0px;top:435.2px;width:106.9px;height:19.400px"></div>
<div class="rtext" style="left:133.8px;top:439.2px;transform:scaleX(0.971)">Sketch7</div>
<div class="row" style="left:58.0px;top:459.2px;width:130.7px;height:19.400px"></div>
<div class="rtext" style="left:115.6px;top:463.2px;transform:scaleX(0.991)">Construction</div>
<svg style="left:0;top:0" width="320" height="500" viewBox="0 0 320 500">
<defs>
<radialGradient id="byel" cx="0.38" cy="0.32" r="0.75"><stop offset="0" stop-color="#fffde0"/><stop offset="0.5" stop-color="#fdec58"/><stop offset="1" stop-color="#f0cc28"/></radialGradient>
<radialGradient id="bblu" cx="0.38" cy="0.32" r="0.75"><stop offset="0" stop-color="#ffffff"/><stop offset="0.6" stop-color="#d2dcf8"/><stop offset="1" stop-color="#9fb0ea"/></radialGradient>
<linearGradient id="gtri" x1="0" y1="0" x2="1" y2="1"><stop offset="0.3" stop-color="#bbb"/><stop offset="1" stop-color="#222"/></linearGradient>
<linearGradient id="gfold" x1="0" y1="0" x2="1" y2="1"><stop offset="0" stop-color="#ffffff"/><stop offset="1" stop-color="#dcdde2"/></linearGradient>
<linearGradient id="gski" x1="0" y1="1" x2="1" y2="0"><stop offset="0" stop-color="#4a8fe0"/><stop offset="0.3" stop-color="#bcd6f4"/><stop offset="0.6" stop-color="#e6f0fb"/><stop offset="1" stop-color="#ffffff"/></linearGradient>
<linearGradient id="gcube" x1="0" y1="0" x2="1" y2="1"><stop offset="0" stop-color="#ffffff"/><stop offset="1" stop-color="#d5d9e2"/></linearGradient>
</defs>
<path d="M31.70 162.30 h-11.300 l11.300 -10.800 z" fill="url(#gtri)" stroke="#333" stroke-width="0.700" stroke-linejoin="round"/>
<rect x="48.70" y="159.60" width="4.200" height="4.600" rx="0.900" fill="#6a6a6a"/><rect x="49.70" y="160.20" width="2.200" height="2.900" fill="#f2f2f2"/><path d="M50.80 160.40 c-2.400 -0.300 -4.35 -2.200 -4.35 -4.800 a4.35 4.35 0 1 1 8.70 0 c0 2.600 -2 4.500 -4.35 4.800z" fill="url(#byel)" stroke="#cf9a0c" stroke-width="1.050"/>
<path d="M69 153.200 l3.600 -3.400 h10 v10.800 l-3.600 3.600 h-10 z" fill="url(#gcube)" stroke="#555" stroke-width="0.900" stroke-linejoin="round"/><path d="M69 153.200 h10 v11 M79 153.200 l3.600 -3.400" fill="none" stroke="#888" stroke-width="0.700"/>
<circle cx="157.400" cy="157.200" r="5.700" fill="#fafafa" stroke="#333" stroke-width="1.300"/><circle cx="157.400" cy="157.200" r="2.300" fill="#222"/>
<path d="M40.50 174.70 v12 l8.300 -6 z" fill="#f6f6f6" stroke="#2e2e2e" stroke-width="1.300" stroke-linejoin="round"/>
<path d="M76.56 179.74 L76.56 181.26 L74.25 182.15 L73.83 183.19 L74.83 185.45 L73.75 186.53 L71.49 185.53 L70.45 185.95 L69.56 188.26 L68.04 188.26 L67.15 185.95 L66.11 185.53 L63.85 186.53 L62.77 185.45 L63.77 183.19 L63.35 182.15 L61.04 181.26 L61.04 179.74 L63.35 178.85 L63.77 177.81 L62.77 175.55 L63.85 174.47 L66.11 175.47 L67.15 175.05 L68.04 172.74 L69.56 172.74 L70.45 175.05 L71.49 175.47 L73.75 174.47 L74.83 175.55 L73.83 177.81 L74.25 178.85 Z" fill="#555"/><circle cx="68.80" cy="180.50" r="3.700" fill="#cecece"/><circle cx="68.80" cy="180.50" r="3.100" fill="none" stroke="#555" stroke-width="1.400"/><circle cx="68.80" cy="180.50" r="1.500" fill="#cecece"/>
<path d="M40.50 198.70 v12 l8.300 -6 z" fill="#f6f6f6" stroke="#2e2e2e" stroke-width="1.300" stroke-linejoin="round"/>
<path d="M61.80 199.50 h5.600 l1.200 1.500 h7.200 v10.300 h-14 z" fill="url(#gfold)" stroke="#333" stroke-width="1.100" stroke-linejoin="round"/><path d="M62.10 202.00 h14" stroke="#555" stroke-width="0.600"/>
<path d="M40.50 222.70 v12 l8.300 -6 z" fill="#f6f6f6" stroke="#2e2e2e" stroke-width="1.300" stroke-linejoin="round"/>
<rect x="66.30" y="231.80" width="4.200" height="4.600" rx="0.900" fill="#6a6a6a"/><rect x="67.30" y="232.40" width="2.200" height="2.900" fill="#f2f2f2"/><path d="M68.40 232.60 c-2.400 -0.300 -4.35 -2.200 -4.35 -4.800 a4.35 4.35 0 1 1 8.70 0 c0 2.600 -2 4.500 -4.35 4.800z" fill="url(#bblu)" stroke="#5b88d8" stroke-width="1.050"/>
<path d="M86.80 223.50 h5.600 l1.200 1.500 h7.200 v10.300 h-14 z" fill="url(#gfold)" stroke="#333" stroke-width="1.100" stroke-linejoin="round"/><path d="M87.10 226.00 h14" stroke="#555" stroke-width="0.600"/>
<path d="M40.50 246.70 v12 l8.300 -6 z" fill="#f6f6f6" stroke="#2e2e2e" stroke-width="1.300" stroke-linejoin="round"/>
<rect x="66.30" y="255.80" width="4.200" height="4.600" rx="0.900" fill="#6a6a6a"/><rect x="67.30" y="256.40" width="2.200" height="2.900" fill="#f2f2f2"/><path d="M68.40 256.60 c-2.400 -0.300 -4.35 -2.200 -4.35 -4.800 a4.35 4.35 0 1 1 8.70 0 c0 2.600 -2 4.500 -4.35 4.800z" fill="url(#bblu)" stroke="#5b88d8" stroke-width="1.050"/>
<path d="M86.80 247.50 h5.600 l1.200 1.500 h7.200 v10.300 h-14 z" fill="url(#gfold)" stroke="#333" stroke-width="1.100" stroke-linejoin="round"/><path d="M87.10 250.00 h14" stroke="#555" stroke-width="0.600"/>
<path d="M50.00 282.70 h-11.300 l11.300 -10.800 z" fill="url(#gtri)" stroke="#333" stroke-width="0.700" stroke-linejoin="round"/>
<rect x="66.30" y="279.80" width="4.200" height="4.600" rx="0.900" fill="#6a6a6a"/><rect x="67.30" y="280.40" width="2.200" height="2.900" fill="#f2f2f2"/><path d="M68.40 280.60 c-2.400 -0.300 -4.35 -2.200 -4.35 -4.800 a4.35 4.35 0 1 1 8.70 0 c0 2.600 -2 4.500 -4.35 4.800z" fill="url(#byel)" stroke="#cf9a0c" stroke-width="1.050"/>
<path d="M86.80 271.50 h5.600 l1.200 1.500 h7.200 v10.300 h-14 z" fill="url(#gfold)" stroke="#333" stroke-width="1.100" stroke-linejoin="round"/><path d="M87.10 274.00 h14" stroke="#555" stroke-width="0.600"/>
<rect x="84.50" y="303.80" width="4.200" height="4.600" rx="0.900" fill="#6a6a6a"/><rect x="85.50" y="304.40" width="2.200" height="2.900" fill="#f2f2f2"/><path d="M86.60 304.60 c-2.400 -0.300 -4.35 -2.200 -4.35 -4.800 a4.35 4.35 0 1 1 8.70 0 c0 2.600 -2 4.500 -4.35 4.800z" fill="url(#byel)" stroke="#cf9a0c" stroke-width="1.050"/>
<rect x="104.65" y="293.75" width="14.400" height="14.700" fill="url(#gski)" stroke="#000" stroke-width="1.150"/><path d="M107.15 296.10 v9.400 h8.800" fill="none" stroke="#0a0a0a" stroke-width="1.250" stroke-linecap="round" stroke-linejoin="round"/><path d="M112.30 298.10 l5.400 -5.300 l2.300 0 l0 2.400 l-5.300 5.300 z" fill="#fbd000"/><path d="M114.00 299.90 l5.300 -5.300 l0 1.300 l-4.600 4.600 z" fill="#e9a200"/><path d="M112.32 298.08 l2.360 2.440 l-4.230 2.340 l-0.700 -0.720 z" fill="#e9a878"/><path d="M109.75 302.14 l0.700 0.720 l-1.350 0.540 z" fill="#111"/>
<rect x="84.50" y="327.80" width="4.200" height="4.600" rx="0.900" fill="#6a6a6a"/><rect x="85.50" y="328.40" width="2.200" height="2.900" fill="#f2f2f2"/><path d="M86.60 328.60 c-2.400 -0.300 -4.35 -2.200 -4.35 -4.800 a4.35 4.35 0 1 1 8.70 0 c0 2.600 -2 4.500 -4.35 4.800z" fill="url(#bblu)" stroke="#5b88d8" stroke-width="1.050"/>
<rect x="104.65" y="317.75" width="14.400" height="14.700" fill="url(#gski)" stroke="#000" stroke-width="1.150"/><path d="M107.15 320.10 v9.400 h8.800" fill="none" stroke="#0a0a0a" stroke-width="1.250" stroke-linecap="round" stroke-linejoin="round"/><path d="M112.30 322.10 l5.400 -5.300 l2.300 0 l0 2.400 l-5.300 5.300 z" fill="#fbd000"/><path d="M114.00 323.90 l5.300 -5.300 l0 1.300 l-4.600 4.600 z" fill="#e9a200"/><path d="M112.32 322.08 l2.360 2.440 l-4.230 2.340 l-0.700 -0.720 z" fill="#e9a878"/><path d="M109.75 326.14 l0.700 0.720 l-1.350 0.540 z" fill="#111"/>
<rect x="84.50" y="351.80" width="4.200" height="4.600" rx="0.900" fill="#6a6a6a"/><rect x="85.50" y="352.40" width="2.200" height="2.900" fill="#f2f2f2"/><path d="M86.60 352.60 c-2.400 -0.300 -4.35 -2.200 -4.35 -4.800 a4.35 4.35 0 1 1 8.70 0 c0 2.600 -2 4.500 -4.35 4.800z" fill="url(#bblu)" stroke="#5b88d8" stroke-width="1.050"/>
<rect x="104.65" y="341.75" width="14.400" height="14.700" fill="url(#gski)" stroke="#000" stroke-width="1.150"/><path d="M107.15 344.10 v9.400 h8.800" fill="none" stroke="#0a0a0a" stroke-width="1.250" stroke-linecap="round" stroke-linejoin="round"/><path d="M112.30 346.10 l5.400 -5.300 l2.300 0 l0 2.400 l-5.300 5.300 z" fill="#fbd000"/><path d="M114.00 347.90 l5.300 -5.300 l0 1.300 l-4.600 4.600 z" fill="#e9a200"/><path d="M112.32 346.08 l2.360 2.440 l-4.230 2.340 l-0.700 -0.720 z" fill="#e9a878"/><path d="M109.75 350.14 l0.700 0.720 l-1.350 0.540 z" fill="#111"/>
<rect x="84.50" y="375.80" width="4.200" height="4.600" rx="0.900" fill="#6a6a6a"/><rect x="85.50" y="376.40" width="2.200" height="2.900" fill="#f2f2f2"/><path d="M86.60 376.60 c-2.400 -0.300 -4.35 -2.200 -4.35 -4.800 a4.35 4.35 0 1 1 8.70 0 c0 2.600 -2 4.500 -4.35 4.800z" fill="url(#bblu)" stroke="#5b88d8" stroke-width="1.050"/>
<rect x="104.65" y="365.75" width="14.400" height="14.700" fill="url(#gski)" stroke="#000" stroke-width="1.150"/><path d="M107.15 368.10 v9.400 h8.800" fill="none" stroke="#0a0a0a" stroke-width="1.250" stroke-linecap="round" stroke-linejoin="round"/><path d="M112.30 370.10 l5.400 -5.300 l2.300 0 l0 2.400 l-5.300 5.300 z" fill="#fbd000"/><path d="M114.00 371.90 l5.300 -5.300 l0 1.300 l-4.600 4.600 z" fill="#e9a200"/><path d="M112.32 370.08 l2.360 2.440 l-4.230 2.340 l-0.700 -0.720 z" fill="#e9a878"/><path d="M109.75 374.14 l0.700 0.720 l-1.350 0.540 z" fill="#111"/>
<rect x="84.50" y="399.80" width="4.200" height="4.600" rx="0.900" fill="#6a6a6a"/><rect x="85.50" y="400.40" width="2.200" height="2.900" fill="#f2f2f2"/><path d="M86.60 400.60 c-2.400 -0.300 -4.35 -2.200 -4.35 -4.800 a4.35 4.35 0 1 1 8.70 0 c0 2.600 -2 4.500 -4.35 4.800z" fill="url(#bblu)" stroke="#5b88d8" stroke-width="1.050"/>
<rect x="104.65" y="389.75" width="14.400" height="14.700" fill="url(#gski)" stroke="#000" stroke-width="1.150"/><path d="M107.15 392.10 v9.400 h8.800" fill="none" stroke="#0a0a0a" stroke-width="1.250" stroke-linecap="round" stroke-linejoin="round"/><path d="M112.30 394.10 l5.400 -5.300 l2.300 0 l0 2.400 l-5.300 5.300 z" fill="#fbd000"/><path d="M114.00 395.90 l5.300 -5.300 l0 1.300 l-4.600 4.600 z" fill="#e9a200"/><path d="M112.32 394.08 l2.360 2.440 l-4.230 2.340 l-0.700 -0.720 z" fill="#e9a878"/><path d="M109.75 398.14 l0.700 0.720 l-1.350 0.540 z" fill="#111"/>
<rect x="84.50" y="423.80" width="4.200" height="4.600" rx="0.900" fill="#6a6a6a"/><rect x="85.50" y="424.40" width="2.200" height="2.900" fill="#f2f2f2"/><path d="M86.60 424.60 c-2.400 -0.300 -4.35 -2.200 -4.35 -4.800 a4.35 4.35 0 1 1 8.70 0 c0 2.600 -2 4.500 -4.35 4.800z" fill="url(#byel)" stroke="#cf9a0c" stroke-width="1.050"/>
<rect x="104.65" y="413.75" width="14.400" height="14.700" fill="url(#gski)" stroke="#000" stroke-width="1.150"/><path d="M107.15 416.10 v9.400 h8.800" fill="none" stroke="#0a0a0a" stroke-width="1.250" stroke-linecap="round" stroke-linejoin="round"/><path d="M112.30 418.10 l5.400 -5.300 l2.300 0 l0 2.400 l-5.300 5.300 z" fill="#fbd000"/><path d="M114.00 419.90 l5.300 -5.300 l0 1.300 l-4.600 4.600 z" fill="#e9a200"/><path d="M112.32 418.08 l2.360 2.440 l-4.230 2.340 l-0.700 -0.720 z" fill="#e9a878"/><path d="M109.75 422.14 l0.700 0.720 l-1.350 0.540 z" fill="#111"/><path d="M103.90 412.60 h6 l-1.500 1.800 l1.500 2.600 h-6 l1.500 -2.600 z" fill="#e8401a"/><path d="M103.90 414.70 h6" stroke="#fff" stroke-width="0.500"/>
<rect x="84.50" y="447.80" width="4.200" height="4.600" rx="0.900" fill="#6a6a6a"/><rect x="85.50" y="448.40" width="2.200" height="2.900" fill="#f2f2f2"/><path d="M86.60 448.60 c-2.400 -0.300 -4.35 -2.200 -4.35 -4.800 a4.35 4.35 0 1 1 8.70 0 c0 2.600 -2 4.500 -4.35 4.800z" fill="url(#byel)" stroke="#cf9a0c" stroke-width="1.050"/>
<rect x="104.65" y="437.75" width="14.400" height="14.700" fill="url(#gski)" stroke="#000" stroke-width="1.150"/><path d="M107.15 440.10 v9.400 h8.800" fill="none" stroke="#0a0a0a" stroke-width="1.250" stroke-linecap="round" stroke-linejoin="round"/><path d="M112.30 442.10 l5.400 -5.300 l2.300 0 l0 2.400 l-5.300 5.300 z" fill="#fbd000"/><path d="M114.00 443.90 l5.300 -5.300 l0 1.300 l-4.600 4.600 z" fill="#e9a200"/><path d="M112.32 442.08 l2.360 2.440 l-4.230 2.340 l-0.700 -0.720 z" fill="#e9a878"/><path d="M109.75 446.14 l0.700 0.720 l-1.350 0.540 z" fill="#111"/>
<path d="M40.50 462.70 v12 l8.300 -6 z" fill="#f6f6f6" stroke="#2e2e2e" stroke-width="1.300" stroke-linejoin="round"/>
<rect x="66.30" y="471.80" width="4.200" height="4.600" rx="0.900" fill="#6a6a6a"/><rect x="67.30" y="472.40" width="2.200" height="2.900" fill="#f2f2f2"/><path d="M68.40 472.60 c-2.400 -0.300 -4.35 -2.200 -4.35 -4.800 a4.35 4.35 0 1 1 8.70 0 c0 2.600 -2 4.500 -4.35 4.800z" fill="url(#byel)" stroke="#cf9a0c" stroke-width="1.050"/>
<path d="M86.80 463.50 h5.600 l1.200 1.500 h7.200 v10.300 h-14 z" fill="url(#gfold)" stroke="#333" stroke-width="1.100" stroke-linejoin="round"/><path d="M87.10 466.00 h14" stroke="#555" stroke-width="0.600"/>
</svg>
<svg style="left:0;top:0" width="1444" height="1022" viewBox="0 0 1444 1022">
<defs>
<linearGradient id="gbl2" x1="0" y1="0" x2="0" y2="1"><stop offset="0" stop-color="#c4d8f2"/><stop offset="1" stop-color="#8fb0dc"/></linearGradient>
<linearGradient id="ggr2" x1="0" y1="0" x2="0" y2="1"><stop offset="0" stop-color="#ffffff"/><stop offset="1" stop-color="#c4c8d2"/></linearGradient>
<linearGradient id="gski2" x1="0" y1="1" x2="1" y2="0"><stop offset="0" stop-color="#4a8fe0"/><stop offset="0.3" stop-color="#bcd6f4"/><stop offset="0.6" stop-color="#e6f0fb"/><stop offset="1" stop-color="#ffffff"/></linearGradient>
<radialGradient id="glens" cx="0.4" cy="0.35" r="0.7"><stop offset="0" stop-color="#ffffff"/><stop offset="1" stop-color="#b8dada"/></radialGradient>
</defs>
<g fill="#4d4d4d">
<rect x="10.500" y="981" width="2" height="14"/><path d="M23 981v14l-9.500-7z"/>
<path d="M44.500 981.300v13.400l-9.500-6.700z"/><rect x="46" y="984.500" width="2.400" height="7"/>
<path d="M61.200 980.500v15l11.800-7.500z"/>
<path d="M88.500 981.300v13.400l9.500-6.700z"/><rect x="84.800" y="984.500" width="2.400" height="7"/>
<path d="M111 981v14l9.500-7z"/><rect x="121.300" y="981" width="2" height="14"/>
</g>
<path d="M153.9 1006.100H610.9M154.9 1001V1006.100M178.2 1001V1006.100M201.8 1001V1006.100M225.8 1001V1006.100M249.8 1001V1006.100M273.9 1001V1006.100M297.9 1001V1006.100M321.9 1001V1006.100M345.9 1001V1006.100M369.9 1001V1006.100M393.9 1001V1006.100M417.9 1001V1006.100M441.9 1001V1006.100M465.9 1001V1006.100M489.9 1001V1006.100M513.9 1001V1006.100M537.9 1001V1006.100M561.9 1001V1006.100M585.9 1001V1006.100M609.9 1001V1006.100" stroke="#666" stroke-width="1.800" fill="none"/>
<rect x="146.75" y="981.65" width="14.400" height="14.700" fill="url(#gski2)" stroke="#000" stroke-width="1.150"/><path d="M149.25 984.00 v9.400 h8.800" fill="none" stroke="#0a0a0a" stroke-width="1.250" stroke-linecap="round" stroke-linejoin="round"/><path d="M154.40 986.00 l5.400 -5.300 l2.300 0 l0 2.400 l-5.300 5.300 z" fill="#fbd000"/><path d="M156.10 987.80 l5.300 -5.300 l0 1.300 l-4.600 4.600 z" fill="#e9a200"/><path d="M154.42 985.98 l2.360 2.440 l-4.230 2.340 l-0.700 -0.720 z" fill="#e9a878"/><path d="M151.85 990.04 l0.700 0.720 l-1.350 0.540 z" fill="#111"/>
<path d="M169.95 983.80 h6.600 v12.600 h-6.600 z" fill="url(#gbl2)" stroke="#3c4c6c" stroke-width="0.900" stroke-linejoin="round"/><path d="M169.95 983.80 l2.800 -2.800 h6.600 l-2.800 2.800 z" fill="#e4edf8" stroke="#3c4c6c" stroke-width="0.900" stroke-linejoin="round"/><path d="M176.55 983.80 l2.800 -2.800 v12.600 l-2.800 2.800 z" fill="#7f9fd0" stroke="#3c4c6c" stroke-width="0.900" stroke-linejoin="round"/><path d="M170.25 993.40 h6 v2.400 h-6 z" fill="#e6eaf0" opacity="0.850"/><path d="M183.25 983.50 V995.70" stroke="#333" stroke-width="1.100"/><path d="M183.25 981.40 l-2.200 4 h4.400 z" fill="#333"/>
<path d="M193.95 983.80 h6.600 v12.600 h-6.600 z" fill="url(#gbl2)" stroke="#3c4c6c" stroke-width="0.900" stroke-linejoin="round"/><path d="M193.95 983.80 l2.800 -2.800 h6.600 l-2.800 2.800 z" fill="#e4edf8" stroke="#3c4c6c" stroke-width="0.900" stroke-linejoin="round"/><path d="M200.55 983.80 l2.800 -2.800 v12.600 l-2.800 2.800 z" fill="#7f9fd0" stroke="#3c4c6c" stroke-width="0.900" stroke-linejoin="round"/><path d="M194.25 993.40 h6 v2.400 h-6 z" fill="#e6eaf0" opacity="0.850"/><path d="M207.25 983.50 V995.70" stroke="#333" stroke-width="1.100"/><path d="M207.25 981.40 l-2.200 4 h4.400 z" fill="#333"/>
<path d="M218.45 984.80 h5 v11.800 h-5 z" fill="url(#ggr2)" stroke="#444" stroke-width="0.900" stroke-linejoin="round"/><path d="M218.45 984.80 l3.800 -3.600 h5 l-3.800 3.600 z" fill="#f6f6f8" stroke="#444" stroke-width="0.900" stroke-linejoin="round"/><path d="M223.45 984.80 l3.800 -3.600 v11.800 l-3.800 3.600 z" fill="#5a9a4a" stroke="#2a5a22" stroke-width="0.900" stroke-linejoin="round"/><path d="M229.25 985.40 l4.400 -4.200 v11.400 l-4.400 4.200 z" fill="#ee9660" stroke="#8a4418" stroke-width="0.900" stroke-linejoin="round"/>
<path d="M242.55 986.40 h10.500 v7.600 h-10.500 z" fill="#edf4ea" stroke="#2a6a22" stroke-width="1" stroke-linejoin="round"/><path d="M243.05 986.40 h3.400 v7.600 h-3.400 z" fill="#9cc890" opacity="0.8"/><path d="M242.55 986.40 l3.400 -2.800 h10.500 l-3.400 2.800 z" fill="#dcebd6" stroke="#2a6a22" stroke-width="1" stroke-linejoin="round"/><path d="M253.05 986.40 l3.400 -2.800 v7.600 l-3.400 2.800 z" fill="#4a8a3c" stroke="#2a6a22" stroke-width="1" stroke-linejoin="round"/><path d="M247.55 985.00 l4.200 -3.800 v12.400 l-4.200 3.800 z" fill="#f6c8a8" fill-opacity="0.900" stroke="#c0561a" stroke-width="1" stroke-linejoin="round"/>
<path d="M266.95 981.70 h2.400 l3.300 3.200 v6 h-2 v5.400 h-3.700 z" fill="url(#ggr2)" stroke="#333" stroke-width="1" stroke-linejoin="round"/><path d="M280.95 981.70 h-2.400 l-3.300 3.200 v6 h2 v5.400 h3.700 z" fill="#9fbde6" stroke="#254a90" stroke-width="1" stroke-linejoin="round"/><path d="M273.95 980.70 v16.200" stroke="#333" stroke-width="1"/>
<path d="M290.45 984.80 h5 v11.800 h-5 z" fill="url(#ggr2)" stroke="#444" stroke-width="0.900" stroke-linejoin="round"/><path d="M290.45 984.80 l3.800 -3.600 h5 l-3.800 3.600 z" fill="#f6f6f8" stroke="#444" stroke-width="0.900" stroke-linejoin="round"/><path d="M295.45 984.80 l3.800 -3.600 v11.800 l-3.800 3.600 z" fill="#5a9a4a" stroke="#2a5a22" stroke-width="0.900" stroke-linejoin="round"/><path d="M301.25 985.40 l4.400 -4.200 v11.400 l-4.400 4.200 z" fill="#ee9660" stroke="#8a4418" stroke-width="0.900" stroke-linejoin="round"/>
<rect x="314.75" y="981.65" width="14.400" height="14.700" fill="url(#gski2)" stroke="#000" stroke-width="1.150"/><path d="M317.25 984.00 v9.400 h8.800" fill="none" stroke="#0a0a0a" stroke-width="1.250" stroke-linecap="round" stroke-linejoin="round"/><path d="M322.40 986.00 l5.400 -5.300 l2.300 0 l0 2.400 l-5.300 5.300 z" fill="#fbd000"/><path d="M324.10 987.80 l5.300 -5.300 l0 1.300 l-4.600 4.600 z" fill="#e9a200"/><path d="M322.42 985.98 l2.360 2.440 l-4.230 2.340 l-0.700 -0.720 z" fill="#e9a878"/><path d="M319.85 990.04 l0.700 0.720 l-1.350 0.540 z" fill="#111"/>
<path d="M337.95 983.80 h6.600 v12.600 h-6.600 z" fill="url(#gbl2)" stroke="#3c4c6c" stroke-width="0.900" stroke-linejoin="round"/><path d="M337.95 983.80 l2.800 -2.800 h6.600 l-2.800 2.800 z" fill="#e4edf8" stroke="#3c4c6c" stroke-width="0.900" stroke-linejoin="round"/><path d="M344.55 983.80 l2.800 -2.800 v12.600 l-2.800 2.800 z" fill="#7f9fd0" stroke="#3c4c6c" stroke-width="0.900" stroke-linejoin="round"/><path d="M338.25 993.40 h6 v2.400 h-6 z" fill="#e6eaf0" opacity="0.850"/><path d="M351.25 983.50 V995.70" stroke="#333" stroke-width="1.100"/><path d="M351.25 981.40 l-2.200 4 h4.400 z" fill="#333"/>
<path d="M362.45 984.80 h5 v11.800 h-5 z" fill="url(#ggr2)" stroke="#444" stroke-width="0.900" stroke-linejoin="round"/><path d="M362.45 984.80 l3.800 -3.600 h5 l-3.800 3.600 z" fill="#f6f6f8" stroke="#444" stroke-width="0.900" stroke-linejoin="round"/><path d="M367.45 984.80 l3.800 -3.600 v11.800 l-3.800 3.600 z" fill="#5a9a4a" stroke="#2a5a22" stroke-width="0.900" stroke-linejoin="round"/><path d="M373.25 985.40 l4.400 -4.200 v11.400 l-4.400 4.200 z" fill="#ee9660" stroke="#8a4418" stroke-width="0.900" stroke-linejoin="round"/>
<rect x="386.75" y="981.65" width="14.400" height="14.700" fill="url(#gski2)" stroke="#000" stroke-width="1.150"/><path d="M389.25 984.00 v9.400 h8.800" fill="none" stroke="#0a0a0a" stroke-width="1.250" stroke-linecap="round" stroke-linejoin="round"/><path d="M394.40 986.00 l5.400 -5.300 l2.300 0 l0 2.400 l-5.300 5.300 z" fill="#fbd000"/><path d="M396.10 987.80 l5.300 -5.300 l0 1.300 l-4.600 4.600 z" fill="#e9a200"/><path d="M394.42 985.98 l2.360 2.440 l-4.230 2.340 l-0.700 -0.720 z" fill="#e9a878"/><path d="M391.85 990.04 l0.700 0.720 l-1.350 0.540 z" fill="#111"/>
<path d="M409.95 983.80 h6.600 v12.600 h-6.600 z" fill="url(#gbl2)" stroke="#3c4c6c" stroke-width="0.900" stroke-linejoin="round"/><path d="M409.95 983.80 l2.800 -2.800 h6.600 l-2.800 2.800 z" fill="#e4edf8" stroke="#3c4c6c" stroke-width="0.900" stroke-linejoin="round"/><path d="M416.55 983.80 l2.800 -2.800 v12.600 l-2.800 2.800 z" fill="#7f9fd0" stroke="#3c4c6c" stroke-width="0.900" stroke-linejoin="round"/><path d="M410.25 993.40 h6 v2.400 h-6 z" fill="#e6eaf0" opacity="0.850"/><path d="M423.25 983.50 V995.70" stroke="#333" stroke-width="1.100"/><path d="M423.25 981.40 l-2.200 4 h4.400 z" fill="#333"/>
<path d="M434.45 984.80 h5 v11.800 h-5 z" fill="url(#ggr2)" stroke="#444" stroke-width="0.900" stroke-linejoin="round"/><path d="M434.45 984.80 l3.800 -3.600 h5 l-3.800 3.600 z" fill="#f6f6f8" stroke="#444" stroke-width="0.900" stroke-linejoin="round"/><path d="M439.45 984.80 l3.800 -3.600 v11.800 l-3.800 3.600 z" fill="#5a9a4a" stroke="#2a5a22" stroke-width="0.900" stroke-linejoin="round"/><path d="M445.25 985.40 l4.400 -4.200 v11.400 l-4.400 4.200 z" fill="#ee9660" stroke="#8a4418" stroke-width="0.900" stroke-linejoin="round"/>
<rect x="458.75" y="981.65" width="14.400" height="14.700" fill="url(#gski2)" stroke="#000" stroke-width="1.150"/><path d="M461.25 984.00 v9.400 h8.800" fill="none" stroke="#0a0a0a" stroke-width="1.250" stroke-linecap="round" stroke-linejoin="round"/><path d="M466.40 986.00 l5.400 -5.300 l2.300 0 l0 2.400 l-5.300 5.300 z" fill="#fbd000"/><path d="M468.10 987.80 l5.300 -5.300 l0 1.300 l-4.600 4.600 z" fill="#e9a200"/><path d="M466.42 985.98 l2.360 2.440 l-4.230 2.340 l-0.700 -0.720 z" fill="#e9a878"/><path d="M463.85 990.04 l0.700 0.720 l-1.350 0.540 z" fill="#111"/>
<path d="M481.95 983.80 h6.600 v12.600 h-6.600 z" fill="url(#gbl2)" stroke="#3c4c6c" stroke-width="0.900" stroke-linejoin="round"/><path d="M481.95 983.80 l2.800 -2.800 h6.600 l-2.800 2.800 z" fill="#e4edf8" stroke="#3c4c6c" stroke-width="0.900" stroke-linejoin="round"/><path d="M488.55 983.80 l2.800 -2.800 v12.600 l-2.800 2.800 z" fill="#7f9fd0" stroke="#3c4c6c" stroke-width="0.900" stroke-linejoin="round"/><path d="M482.25 993.40 h6 v2.400 h-6 z" fill="#e6eaf0" opacity="0.850"/><path d="M495.25 983.50 V995.70" stroke="#333" stroke-width="1.100"/><path d="M495.25 981.40 l-2.200 4 h4.400 z" fill="#333"/>
<path d="M506.45 984.80 h5 v11.800 h-5 z" fill="url(#ggr2)" stroke="#444" stroke-width="0.900" stroke-linejoin="round"/><path d="M506.45 984.80 l3.800 -3.600 h5 l-3.800 3.600 z" fill="#f6f6f8" stroke="#444" stroke-width="0.900" stroke-linejoin="round"/><path d="M511.45 984.80 l3.800 -3.600 v11.800 l-3.800 3.600 z" fill="#5a9a4a" stroke="#2a5a22" stroke-width="0.900" stroke-linejoin="round"/><path d="M517.25 985.40 l4.400 -4.200 v11.400 l-4.400 4.200 z" fill="#ee9660" stroke="#8a4418" stroke-width="0.900" stroke-linejoin="round"/>
<rect x="530.75" y="981.65" width="14.400" height="14.700" fill="url(#gski2)" stroke="#000" stroke-width="1.150"/><path d="M533.25 984.00 v9.400 h8.800" fill="none" stroke="#0a0a0a" stroke-width="1.250" stroke-linecap="round" stroke-linejoin="round"/><path d="M538.40 986.00 l5.400 -5.300 l2.300 0 l0 2.400 l-5.300 5.300 z" fill="#fbd000"/><path d="M540.10 987.80 l5.300 -5.300 l0 1.300 l-4.600 4.600 z" fill="#e9a200"/><path d="M538.42 985.98 l2.360 2.440 l-4.230 2.340 l-0.700 -0.720 z" fill="#e9a878"/><path d="M535.85 990.04 l0.700 0.720 l-1.350 0.540 z" fill="#111"/>
<path d="M553.95 983.80 h6.600 v12.600 h-6.600 z" fill="url(#gbl2)" stroke="#3c4c6c" stroke-width="0.900" stroke-linejoin="round"/><path d="M553.95 983.80 l2.800 -2.800 h6.600 l-2.800 2.800 z" fill="#e4edf8" stroke="#3c4c6c" stroke-width="0.900" stroke-linejoin="round"/><path d="M560.55 983.80 l2.800 -2.800 v12.600 l-2.800 2.800 z" fill="#7f9fd0" stroke="#3c4c6c" stroke-width="0.900" stroke-linejoin="round"/><path d="M554.25 993.40 h6 v2.400 h-6 z" fill="#e6eaf0" opacity="0.850"/><path d="M567.25 983.50 V995.70" stroke="#333" stroke-width="1.100"/><path d="M567.25 981.40 l-2.200 4 h4.400 z" fill="#333"/>
<rect x="578.75" y="981.65" width="14.400" height="14.700" fill="url(#gski2)" stroke="#000" stroke-width="1.150"/><path d="M581.25 984.00 v9.400 h8.800" fill="none" stroke="#0a0a0a" stroke-width="1.250" stroke-linecap="round" stroke-linejoin="round"/><path d="M586.40 986.00 l5.400 -5.300 l2.300 0 l0 2.400 l-5.300 5.300 z" fill="#fbd000"/><path d="M588.10 987.80 l5.300 -5.300 l0 1.300 l-4.600 4.600 z" fill="#e9a200"/><path d="M586.42 985.98 l2.360 2.440 l-4.230 2.340 l-0.700 -0.720 z" fill="#e9a878"/><path d="M583.85 990.04 l0.700 0.720 l-1.350 0.540 z" fill="#111"/>
<rect x="602.75" y="981.65" width="14.400" height="14.700" fill="url(#gski2)" stroke="#000" stroke-width="1.150"/><path d="M605.25 984.00 v9.400 h8.800" fill="none" stroke="#0a0a0a" stroke-width="1.250" stroke-linecap="round" stroke-linejoin="round"/><path d="M610.40 986.00 l5.400 -5.300 l2.300 0 l0 2.400 l-5.300 5.300 z" fill="#fbd000"/><path d="M612.10 987.80 l5.300 -5.300 l0 1.300 l-4.600 4.600 z" fill="#e9a200"/><path d="M610.42 985.98 l2.360 2.440 l-4.230 2.340 l-0.700 -0.720 z" fill="#e9a878"/><path d="M607.85 990.04 l0.700 0.720 l-1.350 0.540 z" fill="#111"/>
<path d="M616 975.300h11.900v4.200l-4.400 4h-3.100l-4.400 -4z" fill="#6c6c6c"/><rect x="620.900" y="982" width="2" height="24.700" fill="#6c6c6c"/>
<path d="M 846.56 946.56 C 840.80 947.28 839.90 950.17 844.40 951.61 M 851.25 951.97 C 857.01 950.71 856.65 947.10 850.17 946.56" fill="none" stroke="#333" stroke-width="1.200"/>
<path d="M 841.88 951.25 L 846.20 948.73 L 846.20 954.13 Z" fill="#222"/>
<path d="M 848.19 940.44 L 851.07 944.76 L 849.27 944.76 L 849.27 955.21 L 847.10 955.21 L 847.10 944.76 L 845.30 944.76 Z" fill="#fff" stroke="#333" stroke-width="0.900" stroke-linejoin="round"/>
<path d="M 873.75 945.84 L 888.70 945.84 L 888.70 954.85 L 873.75 954.85 Z" fill="#fff" stroke="#333" stroke-width="1.100" stroke-linejoin="round"/>
<path d="M 874.29 945.48 L 878.61 941.52 L 880.77 942.96 L 885.10 941.52 L 887.98 945.48" fill="none" stroke="#555" stroke-width="0.900" stroke-linejoin="round"/>
<path d="M 876.45 948.55 L 886.00 948.55 L 886.00 952.33 L 876.45 952.33 Z" fill="#b5c4dc" stroke="#444" stroke-width="1"/>
<path d="M 902.92 948.01 L 902.92 942.96 C 902.92 941.52 904.90 941.52 904.90 942.96 L 905.26 941.16 C 905.62 939.72 907.42 940.08 907.42 941.52 L 907.78 940.80 C 908.50 939.72 909.94 940.44 909.76 941.88 L 910.30 942.96 C 911.02 941.88 912.46 942.60 912.10 944.40 L 913.90 947.64 C 914.62 950.17 913.18 953.05 911.38 954.85 L 905.26 954.85 C 903.82 953.41 901.66 950.17 899.86 948.73 C 899.14 947.28 900.94 946.56 902.92 948.01 Z" fill="#fff" stroke="#333" stroke-width="1" stroke-linejoin="round"/>
<path d="M 904.90 942.96 L 905.08 947.28 M 907.42 941.52 L 907.42 946.92 M 909.76 941.88 L 909.58 947.28" fill="none" stroke="#555" stroke-width="0.700"/>
<path d="M 932.99 950.17 L 936.95 953.77" stroke="#333" stroke-width="2.600" stroke-linecap="round"/>
<circle cx="929.57" cy="947.10" r="4.500" fill="url(#glens)" stroke="#444" stroke-width="1.100"/>
<path d="M 936.59 942.60 L 940.55 942.60 M 938.57 940.80 L 938.57 944.58 M 936.59 946.56 L 940.55 946.56" stroke="#333" stroke-width="1" fill="none"/>
<path d="M 951.71 940.44 L 966.30 940.44 L 966.30 954.85 L 951.71 954.85 Z" fill="none" stroke="#444" stroke-width="0.900" stroke-dasharray="1.600 1.400"/>
<path d="M 961.44 950.89 L 965.40 954.49" stroke="#333" stroke-width="2.800" stroke-linecap="round"/>
<circle cx="957.48" cy="946.56" r="6.200" fill="url(#glens)" stroke="#444" stroke-width="1.200"/>
<path d="M 992.41 940.80 L 1007.53 940.80 L 1007.53 952.33 L 992.41 952.33 Z" fill="#f2f2f2" stroke="#444" stroke-width="1.100" stroke-linejoin="round"/>
<path d="M 994.39 942.60 L 1005.55 942.60 L 1005.55 950.17 L 994.39 950.17 Z" fill="#8fb0dc" stroke="#3a5a9a" stroke-width="0.900"/>
<path d="M 998.35 952.51 L 1001.95 952.51 L 1002.85 954.31 L 1004.29 955.21 L 996.01 955.21 L 997.45 954.31 Z" fill="#f2f2f2" stroke="#555" stroke-width="0.800" stroke-linejoin="round"/>
<path d="M 1023.19 940.44 L 1038.50 940.44 L 1038.50 955.21 L 1023.19 955.21 Z" fill="url(#ggr2)" stroke="#555" stroke-width="0.800"/>
<path d="M 1023.19 940.44 L 1023.19 955.21 M 1023.19 940.44 L 1038.50 940.44 M 1025.71 940.44 L 1025.71 955.21 M 1023.19 942.78 L 1038.50 942.78 M 1028.24 940.44 L 1028.24 955.21 M 1023.19 945.30 L 1038.50 945.30 M 1030.76 940.44 L 1030.76 955.21 M 1023.19 947.82 L 1038.50 947.82 M 1033.28 940.44 L 1033.28 955.21 M 1023.19 950.17 L 1038.50 950.17 M 1035.98 940.44 L 1035.98 955.21 M 1023.19 952.69 L 1038.50 952.69 M 1038.50 940.44 L 1038.50 955.21 M 1023.19 955.21 L 1038.50 955.21" fill="none" stroke="#7a7a7a" stroke-width="0.650"/>
<path d="M 1054.52 941.34 L 1061.18 941.34 L 1061.18 947.10 L 1054.52 947.10 Z" fill="#a9c4ea" stroke="#3a5fae" stroke-width="1" stroke-linejoin="round"/>
<path d="M 1055.96 942.78 L 1059.74 942.78 L 1059.74 945.66 L 1055.96 945.66 Z" fill="#c9dbf4"/>
<path d="M 1062.27 941.34 L 1068.93 941.34 L 1068.93 947.10 L 1062.27 947.10 Z" fill="#a9c4ea" stroke="#3a5fae" stroke-width="1" stroke-linejoin="round"/>
<path d="M 1063.71 942.78 L 1067.49 942.78 L 1067.49 945.66 L 1063.71 945.66 Z" fill="#c9dbf4"/>
<path d="M 1054.52 948.37 L 1061.18 948.37 L 1061.18 954.13 L 1054.52 954.13 Z" fill="#a9c4ea" stroke="#3a5fae" stroke-width="1" stroke-linejoin="round"/>
<path d="M 1055.96 949.81 L 1059.74 949.81 L 1059.74 952.69 L 1055.96 952.69 Z" fill="#c9dbf4"/>
<path d="M 1062.27 948.37 L 1068.93 948.37 L 1068.93 954.13 L 1062.27 954.13 Z" fill="#a9c4ea" stroke="#3a5fae" stroke-width="1" stroke-linejoin="round"/>
<path d="M 1063.71 949.81 L 1067.49 949.81 L 1067.49 952.69 L 1063.71 952.69 Z" fill="#c9dbf4"/>
<path d="M861.5 946.200h5.400l-2.700 3.400zM972.2 946.200h5.400l-2.700 3.400zM1010.4 946.200h5.400l-2.700 3.400zM1041.6 946.200h5.400l-2.700 3.400zM1072.2 946.200h5.400l-2.700 3.400z" fill="#333"/>
</svg>
</body></html>
